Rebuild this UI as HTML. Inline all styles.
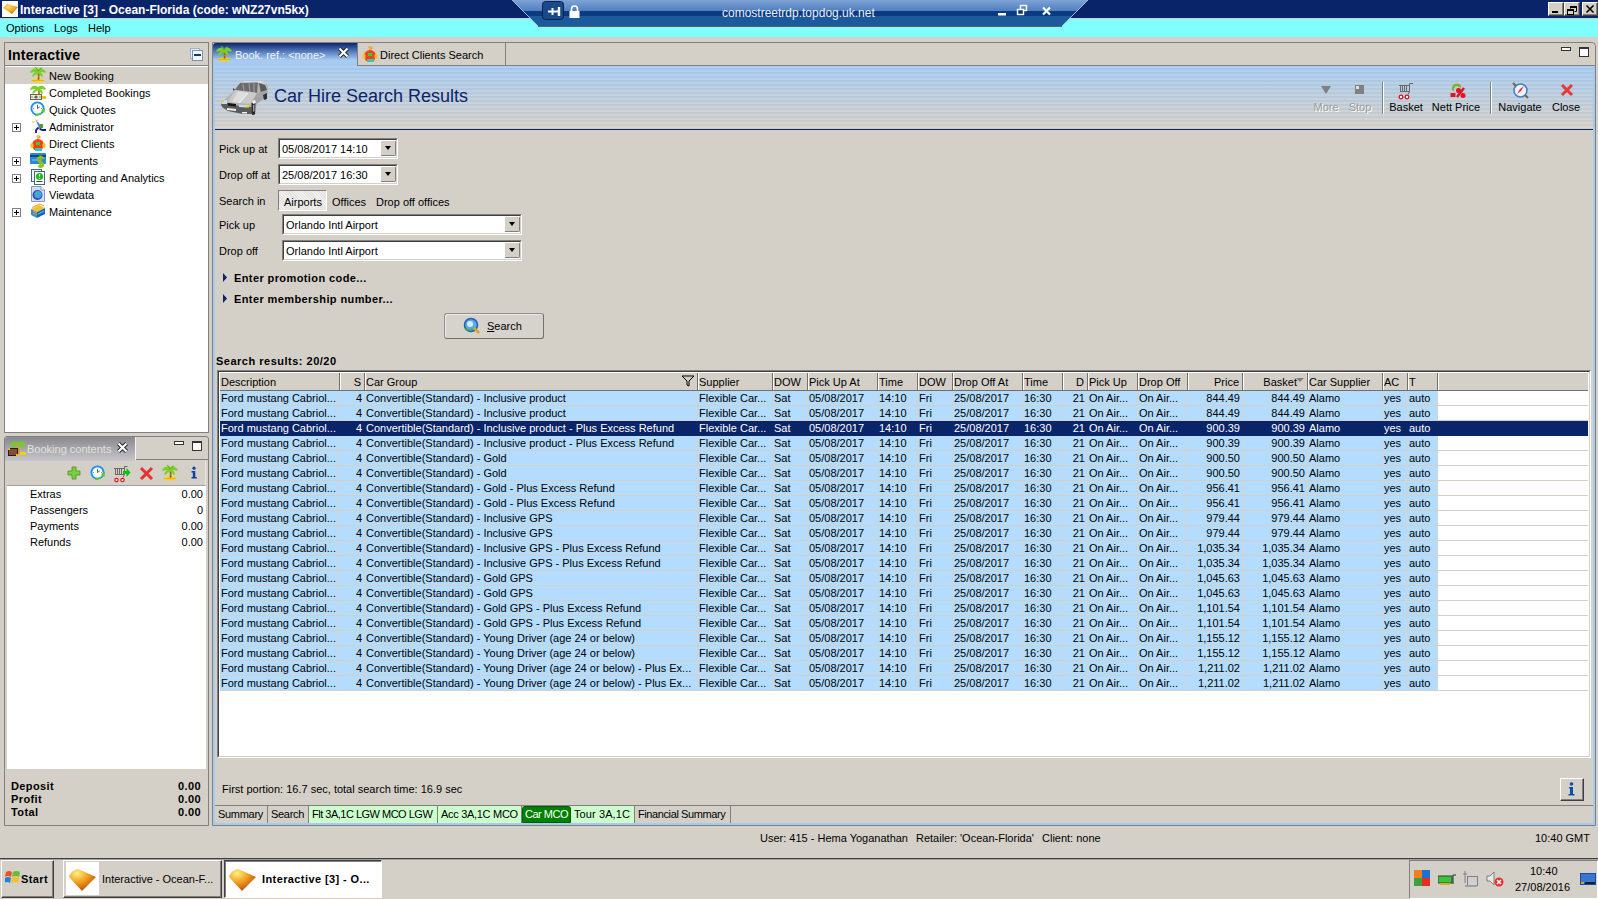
<!DOCTYPE html><html><head><meta charset="utf-8"><style>
*{box-sizing:border-box;margin:0;padding:0}
html,body{width:1598px;height:899px;overflow:hidden;background:#d4d0c8;font-family:"Liberation Sans",sans-serif;font-size:11px;color:#000;position:relative}
.a{position:absolute}
.t{position:absolute;white-space:nowrap;line-height:13px;margin-top:1px}
.b{font-weight:bold;letter-spacing:0.4px}
.sunk{border-style:solid;border-width:1px;border-color:#808080 #fff #fff #808080}
.sunk2{border-style:solid;border-width:1px;border-color:#404040 #d4d0c8 #d4d0c8 #404040}
.rais{border-style:solid;border-width:1px;border-color:#fff #404040 #404040 #fff}
.rais2{border-style:solid;border-width:1px;border-color:#d4d0c8 #808080 #808080 #d4d0c8}
.ddb{position:absolute;background:#d4d0c8;border:1px solid;border-color:#fff #808080 #808080 #fff;border-radius:2px}
.ddb:after{content:"";position:absolute;left:50%;top:50%;margin:-2px 0 0 -3px;border-left:3px solid transparent;border-right:3px solid transparent;border-top:4px solid #000}
.hdr{position:absolute;top:0;height:16px;background:#d4d0c8;border-right:1px solid #808080;border-bottom:1px solid #808080;border-top:1px solid #fff;line-height:14px;padding:0 2px;overflow:hidden;white-space:nowrap}
.c{position:absolute;white-space:nowrap;overflow:hidden;line-height:14px;padding:0 2px}
.r{text-align:right}
</style></head><body>
<div class="a" style="left:0;top:0;width:1598px;height:18px;background:#0a246a"></div>
<div class="a" style="left:0;top:18px;width:1598px;height:1px;background:#d4d0c8"></div>
<div class="a" style="left:0;top:19px;width:1598px;height:18px;background:#80ffff"></div>
<div class="a" style="left:2px;top:1px;width:16px;height:16px;background:#fff"></div>
<svg class="a" style="left:2px;top:1px" width="16" height="16"><defs><radialGradient id="gi" cx="0.35" cy="0.3" r="0.8"><stop offset="0" stop-color="#ffe060"/><stop offset="0.6" stop-color="#f0a020"/><stop offset="1" stop-color="#c05010"/></radialGradient></defs><path d="M1 7 L5 3 L16 6 L10 13 Z" fill="url(#gi)"/></svg>
<div class="t b" style="left:20px;top:2px;color:#fff;font-size:12px;line-height:14px;letter-spacing:0">Interactive [3] - Ocean-Florida (code: wNZ27vn5kx)</div>
<div class="a" style="left:1548px;top:2px;width:16px;height:14px;background:#d4d0c8;border:1px solid;border-color:#fff #404040 #404040 #fff;box-shadow:inset -1px -1px #808080"></div>
<div class="a" style="left:1564px;top:2px;width:16px;height:14px;background:#d4d0c8;border:1px solid;border-color:#fff #404040 #404040 #fff;box-shadow:inset -1px -1px #808080"></div>
<div class="a" style="left:1582px;top:2px;width:16px;height:14px;background:#d4d0c8;border:1px solid;border-color:#fff #404040 #404040 #fff;box-shadow:inset -1px -1px #808080"></div>
<div class="a" style="left:1552px;top:11px;width:6px;height:2px;background:#000"></div>
<svg class="a" style="left:1564px;top:2px" width="16" height="14"><path d="M6.5 4.5h6v5h-2 M6.5 6.5V4" fill="none" stroke="#000" stroke-width="1"/><rect x="6" y="4" width="7" height="2" fill="#000"/><rect x="3.5" y="7.5" width="6" height="5" fill="none" stroke="#000"/><rect x="3" y="7" width="7" height="2" fill="#000"/></svg>
<svg class="a" style="left:1582px;top:2px" width="16" height="14"><path d="M4.5 3.5l7 7M11.5 3.5l-7 7" stroke="#000" stroke-width="1.6"/></svg>
<svg class="a" style="left:510px;top:0" width="580" height="28">
<defs><linearGradient id="rdp" x1="0" y1="0" x2="0" y2="1">
<stop offset="0" stop-color="#7fa3d6"/><stop offset="0.42" stop-color="#4f7fbd"/><stop offset="0.43" stop-color="#0a3a82"/><stop offset="0.62" stop-color="#0a3a82"/><stop offset="0.63" stop-color="#1c5a9c"/><stop offset="1" stop-color="#1c5a9c"/></linearGradient></defs>
<path d="M2 0 L578 0 L552 26 L28 26 Z" fill="url(#rdp)"/>
<path d="M28 26.5 L552 26.5" stroke="#606060" stroke-width="1"/>
<path d="M2 0 L28 26" stroke="#a0b8d8" stroke-width="1"/>
<path d="M578 0 L552 26" stroke="#a0b8d8" stroke-width="1"/>
<rect x="32.5" y="1.5" width="21" height="18" rx="3" fill="#1a4a8a" stroke="#0a2050" />
<path d="M38 11.5h11" stroke="#fff" stroke-width="2"/><path d="M49 7v9" stroke="#fff" stroke-width="2.4"/><path d="M42.5 8v7" stroke="#fff" stroke-width="2"/>
<path d="M61.5 11V9a3 3 0 0 1 6 0v2" stroke="#fff" stroke-width="1.6" fill="none"/>
<rect x="59.5" y="11" width="10" height="7" fill="#fff"/>
<rect x="488" y="13" width="8" height="2.5" fill="#fff"/>
<rect x="510.5" y="5.5" width="6" height="5" fill="none" stroke="#fff" stroke-width="1.4"/>
<rect x="507.5" y="9.5" width="6" height="5" fill="#0a3a82" stroke="#fff" stroke-width="1.4"/>
<path d="M533 7.5l7 7M540 7.5l-7 7" stroke="#fff" stroke-width="2.2"/>
</svg>
<div class="t" style="left:722px;top:6px;color:#e8eef8;font-size:12px">comostreetrdp.topdog.uk.net</div>
<div class="t" style="left:6px;top:21px">Options</div>
<div class="t" style="left:54px;top:21px">Logs</div>
<div class="t" style="left:88px;top:21px">Help</div>
<div class="a" style="left:4px;top:42px;width:205px;height:391px;border:1px solid #808080;background:#fff"></div>
<div class="a" style="left:5px;top:43px;width:203px;height:23px;background:#d4d0c8;border-bottom:1px solid #808080"></div>
<div class="t b" style="left:8px;top:46px;font-size:14px;line-height:16px;letter-spacing:0.2px">Interactive</div>
<svg class="a" style="left:190px;top:48px" width="14" height="14"><rect x="0.5" y="0.5" width="9" height="10" fill="#e8f0fa" stroke="#a0b0c8"/><rect x="2.5" y="2.5" width="10" height="10" fill="#f0f8ff" stroke="#8090a8"/><rect x="4" y="6" width="7" height="2" fill="#1a3a6a"/></svg>
<div class="a" style="left:5px;top:67px;width:203px;height:17px;background:#d4d0c8"></div>
<svg class="a" style="left:30px;top:67px" width="16" height="16" viewBox="0 0 16 16"><ellipse cx="8" cy="13.5" rx="6.5" ry="1.8" fill="#f8d800"/><path d="M2 13.5h12" stroke="#e0b000" stroke-width="0.8"/><path d="M7.5 4 Q9.5 8 8.5 13" stroke="#d08018" stroke-width="2" fill="none"/><circle cx="8.7" cy="8" r="0.6" fill="#603000"/><circle cx="8.6" cy="11" r="0.6" fill="#603000"/><path d="M8 4 Q4 0.5 1 5 Q4 3.5 8 4.5 Q5 5 3 9 Q6 6 8 5 Q10 6 12 9 Q11 5 8 4.5 Q12 3.5 15 5 Q12 0.5 8 4z" fill="#78d028" stroke="#78d028" stroke-width="1.6" stroke-linejoin="round"/><path d="M8 4 Q7 1 5 0.5 M8 4 Q10 1 12 1" stroke="#60b818" stroke-width="1.2" fill="none"/></svg>
<div class="t" style="left:49px;top:69px">New Booking</div>
<svg class="a" style="left:30px;top:84px" width="16" height="16" viewBox="0 0 16 16"><path d="M8 4 Q9.5 7 9 11" stroke="#d08018" stroke-width="2" fill="none"/><path d="M8 4 Q4 0.5 1 5 Q4 3.5 8 4.5 Q5 5 3 9 Q6 6 8 5 Q10 6 12 9 Q11 5 8 4.5 Q12 3.5 15 5 Q12 0.5 8 4z" fill="#78d028" stroke="#78d028" stroke-width="1.6" stroke-linejoin="round"/><rect x="12" y="12" width="4" height="3" fill="#f0c010"/><rect x="0.5" y="10.5" width="11" height="5" fill="#e8e8d8" stroke="#686850"/><circle cx="6" cy="13" r="1.6" fill="#606050"/><path d="M2 12v2M10 12v2" stroke="#909070"/></svg>
<div class="t" style="left:49px;top:86px">Completed Bookings</div>
<svg class="a" style="left:30px;top:101px" width="16" height="16" viewBox="0 0 16 16"><circle cx="7.5" cy="7.5" r="7" fill="#1890f0"/><circle cx="7.5" cy="7.5" r="5.2" fill="#fcfcfc"/><path d="M7.5 3.8v3.7l2.3-1.8" stroke="#505050" stroke-width="0.9" fill="none"/><circle cx="3.5" cy="7.5" r="0.5" fill="#606060"/><circle cx="11.5" cy="7.5" r="0.5" fill="#606060"/><path d="M5 15 Q10 15 12.5 11 L14.5 12 L15 6.5 L11 9.5 L12.5 10 Q10.5 13 6 13z" fill="#58c828"/></svg>
<div class="t" style="left:49px;top:103px">Quick Quotes</div>
<svg class="a" style="left:30px;top:118px" width="16" height="16" viewBox="0 0 16 16"><path d="M5 1.5l3 0.5l-1 2z" fill="#f0c040"/><path d="M6 3 L9 5 L12 10 L9 10 Z" fill="#6080c0"/><rect x="10" y="6" width="3" height="4" fill="#50a030"/><path d="M8.5 9.5 L6 12 L6 15 M9.5 10.5 L12 12 L16 12" stroke="#102090" stroke-width="1.8" fill="none"/><path d="M2 4h3" stroke="#f0c040" stroke-width="1"/></svg>
<div class="t" style="left:49px;top:120px">Administrator</div>
<div class="a" style="left:12px;top:123px;width:9px;height:9px;border:1px solid #808080;background:#fff"></div>
<div class="a" style="left:14px;top:127px;width:5px;height:1px;background:#000"></div>
<div class="a" style="left:16px;top:125px;width:1px;height:5px;background:#000"></div>
<svg class="a" style="left:30px;top:135px" width="16" height="16" viewBox="0 0 16 16"><path d="M6.5 1.5 Q9 0 10 2 Q9 3.5 7 3" stroke="#f0a020" stroke-width="1.4" fill="none"/><circle cx="8" cy="10" r="6" fill="#f84018"/><rect x="0.5" y="8" width="3" height="5" rx="1.5" fill="#f8c020"/><rect x="12.5" y="8" width="3" height="5" rx="1.5" fill="#f8c020"/><rect x="6" y="7" width="4" height="3" fill="#30d040"/><rect x="5" y="13" width="7" height="3" fill="#30c8c0"/></svg>
<div class="t" style="left:49px;top:137px">Direct Clients</div>
<svg class="a" style="left:30px;top:152px" width="16" height="16" viewBox="0 0 16 16"><rect x="0" y="1" width="16" height="11" rx="1" fill="#2a88d8"/><rect x="0" y="3" width="16" height="2" fill="#104878"/><path d="M2 8h5" stroke="#80c0f0" stroke-width="1"/><path d="M13.5 7 Q13 5 10.5 5 Q7 5.5 8 8 Q9 10 11.5 10.5 Q14 11.5 13 13.5 Q11.5 15.5 8 14 M10.5 3.5v13" stroke="#90c020" stroke-width="2.2" fill="none"/></svg>
<div class="t" style="left:49px;top:154px">Payments</div>
<div class="a" style="left:12px;top:157px;width:9px;height:9px;border:1px solid #808080;background:#fff"></div>
<div class="a" style="left:14px;top:161px;width:5px;height:1px;background:#000"></div>
<div class="a" style="left:16px;top:159px;width:1px;height:5px;background:#000"></div>
<svg class="a" style="left:30px;top:169px" width="16" height="16" viewBox="0 0 16 16"><rect x="1.5" y="0.5" width="10" height="12" fill="#f4f8fc" stroke="#406878"/><rect x="4.5" y="2.5" width="10" height="13" fill="#fff" stroke="#406878"/><circle cx="9.5" cy="7.5" r="3.6" fill="#20b820"/><path d="M9.5 5v2.5M9.5 9v0.8" stroke="#fff" stroke-width="1.2"/><path d="M6.5 12.5h6" stroke="#404040"/></svg>
<div class="t" style="left:49px;top:171px">Reporting and Analytics</div>
<div class="a" style="left:12px;top:174px;width:9px;height:9px;border:1px solid #808080;background:#fff"></div>
<div class="a" style="left:14px;top:178px;width:5px;height:1px;background:#000"></div>
<div class="a" style="left:16px;top:176px;width:1px;height:5px;background:#000"></div>
<svg class="a" style="left:30px;top:186px" width="16" height="16" viewBox="0 0 16 16"><path d="M1.5 0.5h9.5l3.5 3.5v11.5h-13z" fill="#d4e0f0" stroke="#8898b8"/><path d="M11 0.5v3.5h3.5" fill="#fff" stroke="#8898b8"/><circle cx="7.5" cy="9" r="5" fill="#3040c0"/><circle cx="8" cy="8.5" r="3.8" fill="#40a0e8"/><path d="M6 6 Q9 6 9 9 Q7 11 5.5 9z" fill="#30c0a0"/></svg>
<div class="t" style="left:49px;top:188px">Viewdata</div>
<svg class="a" style="left:30px;top:203px" width="16" height="16" viewBox="0 0 16 16"><path d="M1 6 L9 2 L15 5 L7 9 Z" fill="#f8c030"/><path d="M1 6 L7 9 L7 15 L1 12 Z" fill="#2a90d8"/><path d="M7 9 L15 5 L15 11 L7 15 Z" fill="#1868b8"/><path d="M2 4.5 L10 1 L14 3 M3 8 L7 10 M3 10 L7 12" stroke="#f0a020" stroke-width="1" fill="none"/><path d="M8 11 L14 8" stroke="#60c0f0"/></svg>
<div class="t" style="left:49px;top:205px">Maintenance</div>
<div class="a" style="left:12px;top:208px;width:9px;height:9px;border:1px solid #808080;background:#fff"></div>
<div class="a" style="left:14px;top:212px;width:5px;height:1px;background:#000"></div>
<div class="a" style="left:16px;top:210px;width:1px;height:5px;background:#000"></div>
<div class="a" style="left:4px;top:436px;width:205px;height:390px;border:1px solid #808080;border-radius:3px 3px 0 0;background:#d4d0c8"></div>
<div class="a" style="left:5px;top:437px;width:130px;height:24px;background:linear-gradient(#8a8a8e,#a8a8ac 50%,#c8c6cc);border-radius:3px 0 0 0"></div>
<div class="a" style="left:135px;top:459px;width:73px;height:1px;background:#808080"></div>
<div class="a" style="left:135px;top:437px;width:1px;height:23px;background:#f4f4f4"></div>
<svg class="a" style="left:8px;top:440px" width="18" height="16" viewBox="0 0 18 16"><path d="M10 4 Q11 8 10.5 14" stroke="#d0a020" stroke-width="2" fill="none"/><path d="M10 4 Q6 1 3 5 M10 4 Q14 1 17 5 M10 4 Q7 3 5 8 M10 4 Q13 3 15 8" stroke="#70d020" stroke-width="2" fill="none"/><rect x="12" y="12" width="6" height="3" fill="#f8d000"/><rect x="0.5" y="8.5" width="9" height="7" fill="#805030" stroke="#301808"/><rect x="0" y="8" width="2" height="2" fill="#f0c000"/><rect x="8" y="14" width="2" height="2" fill="#f0c000"/></svg>
<div class="t" style="left:27px;top:442px;color:#e4e0dc">Booking contents</div>
<svg class="a" style="left:116px;top:441px" width="13" height="13"><path d="M2.5 2.5l8 8M10.5 2.5l-8 8" stroke="#202020" stroke-width="4"/><path d="M2.5 2.5l8 8M10.5 2.5l-8 8" stroke="#fff" stroke-width="2.2"/></svg>
<div class="a" style="left:174px;top:441px;width:10px;height:4px;border:1px solid #333;background:#fff"></div>
<div class="a" style="left:192px;top:441px;width:10px;height:10px;border:1px solid #333;border-top-width:2px;background:#fff"></div>
<div class="a" style="left:7px;top:461px;width:199px;height:25px;background:#d4d0c8;border-bottom:1px solid #a0a0a0;border-right:1px solid #e8e8e8"></div>
<svg class="a" style="left:66px;top:465px" width="16" height="16" viewBox="0 0 16 16"><path d="M6 2h4v4h4v4h-4v4h-4v-4h-4v-4h4z" fill="#7ad040" stroke="#4a9020" stroke-width="0.8"/></svg>
<svg class="a" style="left:90px;top:465px" width="16" height="16" viewBox="0 0 16 16"><circle cx="7.5" cy="7.5" r="7" fill="#1890f0"/><circle cx="7.5" cy="7.5" r="5.2" fill="#fcfcfc"/><path d="M7.5 3.8v3.7l2.3-1.8" stroke="#505050" stroke-width="0.9" fill="none"/><circle cx="3.5" cy="7.5" r="0.5" fill="#606060"/><circle cx="11.5" cy="7.5" r="0.5" fill="#606060"/><path d="M5 15 Q10 15 12.5 11 L14.5 12 L15 6.5 L11 9.5 L12.5 10 Q10.5 13 6 13z" fill="#58c828"/></svg>
<svg class="a" style="left:113px;top:465px" width="18" height="18" viewBox="0 0 18 18"><path d="M1 3.5h10.5M2.5 3.5v6M4.5 3.5v6M6.5 3.5v6M8.5 3.5v6M2 9.5h9M11.5 9.5V1.5h3M11.5 9.5l-1.5 3" stroke="#6a6a6a" stroke-width="1" fill="none"/><circle cx="3.5" cy="15" r="1.7" fill="#fff" stroke="#e81010" stroke-width="1.2"/><circle cx="9.5" cy="15" r="1.7" fill="#fff" stroke="#e81010" stroke-width="1.2"/><path d="M10 6h3.5v-3l4 4.5-4 4.5v-3h-3.5z" fill="#10c010"/></svg>
<svg class="a" style="left:139px;top:466px" width="15" height="15" viewBox="0 0 15 15"><path d="M2 2l11 11M13 2l-11 11" stroke="#e83030" stroke-width="3"/></svg>
<svg class="a" style="left:162px;top:465px" width="16" height="16" viewBox="0 0 16 16"><ellipse cx="8" cy="13.5" rx="6.5" ry="1.8" fill="#f8d800"/><path d="M2 13.5h12" stroke="#e0b000" stroke-width="0.8"/><path d="M7.5 4 Q9.5 8 8.5 13" stroke="#d08018" stroke-width="2" fill="none"/><circle cx="8.7" cy="8" r="0.6" fill="#603000"/><circle cx="8.6" cy="11" r="0.6" fill="#603000"/><path d="M8 4 Q4 0.5 1 5 Q4 3.5 8 4.5 Q5 5 3 9 Q6 6 8 5 Q10 6 12 9 Q11 5 8 4.5 Q12 3.5 15 5 Q12 0.5 8 4z" fill="#78d028" stroke="#78d028" stroke-width="1.6" stroke-linejoin="round"/><path d="M8 4 Q7 1 5 0.5 M8 4 Q10 1 12 1" stroke="#60b818" stroke-width="1.2" fill="none"/></svg>
<svg class="a" style="left:189px;top:466px" width="10" height="13" viewBox="0 0 10 13"><circle cx="5" cy="2.2" r="1.6" fill="#1040a8"/><path d="M2.5 5h3.8v6h1.5v1.5h-5.3v-1.5h1.3v-4.5h-1.3z" fill="#1040a8"/></svg>
<div class="a" style="left:7px;top:486px;width:199px;height:283px;background:#fff"></div>
<div class="t" style="left:30px;top:487px">Extras</div>
<div class="t" style="right:1395px;top:487px">0.00</div>
<div class="t" style="left:30px;top:503px">Passengers</div>
<div class="t" style="right:1395px;top:503px">0</div>
<div class="t" style="left:30px;top:519px">Payments</div>
<div class="t" style="right:1395px;top:519px">0.00</div>
<div class="t" style="left:30px;top:535px">Refunds</div>
<div class="t" style="right:1395px;top:535px">0.00</div>
<div class="t b" style="left:11px;top:779px">Deposit</div>
<div class="t b" style="right:1397px;top:779px">0.00</div>
<div class="t b" style="left:11px;top:792px">Profit</div>
<div class="t b" style="right:1397px;top:792px">0.00</div>
<div class="t b" style="left:11px;top:805px">Total</div>
<div class="t b" style="right:1397px;top:805px">0.00</div>
<div class="t" style="left:760px;top:831px">User: 415 - Hema Yoganathan</div>
<div class="t" style="left:916px;top:831px">Retailer: 'Ocean-Florida'</div>
<div class="t" style="left:1042px;top:831px">Client: none</div>
<div class="t" style="right:8px;top:831px">10:40 GMT</div>
<div class="a" style="left:0;top:858px;width:1598px;height:1px;background:#404040"></div>
<div class="a" style="left:0;top:859px;width:1598px;height:1px;background:#a0a0a0"></div>
<div class="a" style="left:1px;top:860px;width:53px;height:38px;background:#d4d0c8;border:1px solid;border-color:#fff #404040 #404040 #fff;box-shadow:inset -1px -1px #808080"></div>
<svg class="a" style="left:5px;top:869px" width="16" height="16" viewBox="0 0 16 16"><path d="M1 3 Q4 1 7 3 L6 8 Q3 6 0 8z" fill="#f05020"/><path d="M8 3 Q11 1 15 3 L14 8 Q11 6 7 8z" fill="#60c030"/><path d="M0 9 Q3 7 6 9 L5 14 Q2 12 -1 14z" fill="#2080e0"/><path d="M7 9 Q10 7 14 9 L13 14 Q10 12 6 14z" fill="#f8c020"/></svg>
<div class="t b" style="left:21px;top:872px">Start</div>
<div class="a" style="left:63px;top:860px;width:159px;height:38px;background:#d4d0c8;border:1px solid;border-color:#fff #404040 #404040 #fff;box-shadow:inset -1px -1px #808080"></div>
<div class="a" style="left:66px;top:862px;width:33px;height:33px;background:#fff"></div>
<svg class="a" style="left:68px;top:866px" width="30" height="27" viewBox="0 0 30 27"><defs><radialGradient id="tg1" cx="0.3" cy="0.2" r="0.9"><stop offset="0" stop-color="#fff080"/><stop offset="0.45" stop-color="#f0a020"/><stop offset="1" stop-color="#b04008"/></radialGradient></defs><path d="M1 11 Q3 4 10 3 L28 11 L14 25 Z" fill="url(#tg1)"/></svg>
<div class="t" style="left:102px;top:872px">Interactive - Ocean-F...</div>
<div class="a" style="left:224px;top:860px;width:158px;height:38px;background:#fff;border:1px solid;border-color:#404040 #fff #fff #404040;box-shadow:inset 1px 1px #808080"></div>
<svg class="a" style="left:228px;top:866px" width="30" height="27" viewBox="0 0 30 27"><defs><radialGradient id="tg2" cx="0.3" cy="0.2" r="0.9"><stop offset="0" stop-color="#fff080"/><stop offset="0.45" stop-color="#f0a020"/><stop offset="1" stop-color="#b04008"/></radialGradient></defs><path d="M1 11 Q3 4 10 3 L28 11 L14 25 Z" fill="url(#tg2)"/></svg>
<div class="t b" style="left:262px;top:872px">Interactive [3] - O...</div>
<div class="a" style="left:1409px;top:860px;width:189px;height:39px;border:1px solid;border-color:#808080 #fff #fff #808080"></div>
<svg class="a" style="left:1414px;top:870px" width="16" height="16" viewBox="0 0 16 16"><rect x="0" y="0" width="8" height="8" fill="#f08020"/><rect x="8" y="0" width="8" height="8" fill="#2070d0"/><rect x="0" y="8" width="8" height="8" fill="#40a040"/><rect x="8" y="8" width="8" height="8" fill="#e03020"/></svg>
<svg class="a" style="left:1438px;top:873px" width="18" height="14" viewBox="0 0 18 14"><rect x="0" y="3" width="14" height="7" fill="#40c040" stroke="#205020"/><rect x="2" y="10" width="10" height="2" fill="#d0b020"/><path d="M15 2v9M15 2h3" stroke="#203020"/></svg>
<svg class="a" style="left:1462px;top:870px" width="18" height="18" viewBox="0 0 18 18"><rect x="5.5" y="6.5" width="10" height="9" fill="#d0d0d0" stroke="#808080"/><path d="M3 1v12M1 4h4" stroke="#808080" fill="none"/><rect x="3" y="15" width="12" height="2" fill="#a0a0a0"/></svg>
<svg class="a" style="left:1486px;top:871px" width="18" height="16" viewBox="0 0 18 16"><path d="M1 5h3l4-4v13l-4-4h-3z" fill="#e8e8e8" stroke="#808080"/><circle cx="13" cy="11" r="4.5" fill="#e83030"/><path d="M11 9l4 4M15 9l-4 4" stroke="#fff" stroke-width="1.5"/></svg>
<div class="t" style="left:1530px;top:864px">10:40</div>
<div class="t" style="left:1515px;top:880px">27/08/2016</div>
<svg class="a" style="left:1580px;top:873px" width="16" height="13" viewBox="0 0 16 13"><rect x="0" y="0" width="16" height="12" fill="#1a4aa8"/><rect x="1" y="1" width="14" height="9" fill="#3a78d0"/><rect x="5" y="9" width="10" height="2" fill="#102030"/><rect x="1" y="9" width="3" height="2" fill="#e0a020"/></svg>
<div class="a" style="left:212px;top:42px;width:1384px;height:784px;border:1px solid #808080;border-radius:0 4px 0 0;background:#d4d0c8"></div>
<div class="a" style="left:212px;top:65px;width:1384px;height:1px;background:#808080"></div>
<div class="a" style="left:213px;top:66px;width:1382px;height:759px;border:2px solid #a6caf0;border-top:0"></div>
<div class="a" style="left:213px;top:43px;width:144px;height:23px;background:linear-gradient(#0a246a 0px,#5a80c0 9px,#a6caf0 17px,#a6caf0 23px);border-radius:3px 0 0 0"></div>
<svg class="a" style="left:216px;top:46px" width="16" height="16" viewBox="0 0 16 16"><ellipse cx="8" cy="13.5" rx="6.5" ry="1.8" fill="#f8d800"/><path d="M2 13.5h12" stroke="#e0b000" stroke-width="0.8"/><path d="M7.5 4 Q9.5 8 8.5 13" stroke="#d08018" stroke-width="2" fill="none"/><circle cx="8.7" cy="8" r="0.6" fill="#603000"/><circle cx="8.6" cy="11" r="0.6" fill="#603000"/><path d="M8 4 Q4 0.5 1 5 Q4 3.5 8 4.5 Q5 5 3 9 Q6 6 8 5 Q10 6 12 9 Q11 5 8 4.5 Q12 3.5 15 5 Q12 0.5 8 4z" fill="#78d028" stroke="#78d028" stroke-width="1.6" stroke-linejoin="round"/><path d="M8 4 Q7 1 5 0.5 M8 4 Q10 1 12 1" stroke="#60b818" stroke-width="1.2" fill="none"/></svg>
<div class="t" style="left:235px;top:48px;color:#f0f4fa">Book. ref.: &lt;none&gt;</div>
<svg class="a" style="left:337px;top:46px" width="13" height="13" viewBox="0 0 13 13"><path d="M2.5 2.5l8 8M10.5 2.5l-8 8" stroke="#202020" stroke-width="4"/><path d="M2.5 2.5l8 8M10.5 2.5l-8 8" stroke="#fff" stroke-width="2.2"/></svg>
<div class="a" style="left:357px;top:43px;width:149px;height:23px;border-right:1px solid #808080;border-left:1px solid #808080"></div>
<svg class="a" style="left:362px;top:46px" width="16" height="16" viewBox="0 0 16 16"><path d="M6.5 1.5 Q9 0 10 2 Q9 3.5 7 3" stroke="#f0a020" stroke-width="1.4" fill="none"/><circle cx="8" cy="10" r="6" fill="#f84018"/><rect x="0.5" y="8" width="3" height="5" rx="1.5" fill="#f8c020"/><rect x="12.5" y="8" width="3" height="5" rx="1.5" fill="#f8c020"/><rect x="6" y="7" width="4" height="3" fill="#30d040"/><rect x="5" y="13" width="7" height="3" fill="#30c8c0"/></svg>
<div class="t" style="left:380px;top:48px">Direct Clients Search</div>
<div class="a" style="left:1561px;top:47px;width:10px;height:4px;border:1px solid #333;background:#fff"></div>
<div class="a" style="left:1579px;top:47px;width:10px;height:10px;border:1px solid #333;border-top-width:2px;background:#fff"></div>
<div class="a" style="left:215px;top:66px;width:1378px;height:63px;background:repeating-linear-gradient(rgba(255,255,255,0.10) 0 2px,rgba(0,0,0,0.02) 2px 4px),linear-gradient(#a6caf0,#d4d0c8)"></div>
<div class="a" style="left:215px;top:129px;width:1378px;height:1px;background:#0a246a"></div>
<svg class="a" style="left:221px;top:80px" width="49" height="36" viewBox="0 0 49 36">
<path d="M0 23 L5 18 L11 13 L16 6 L23 1 L41 1 L45 4 L47 6 L47 12 L45 17 L41 20 L36 23 L34 34 L22 34 L7 31 L1 27 Z" fill="#b4b4b4"/>
<path d="M16 6 L23 1 L41 1 L45 4 L38 3 L19 3 Z" fill="#d8d8d8"/>
<path d="M14 10 L19 3 L37 2.5 L36 13 Z" fill="#6c6c6c"/>
<path d="M22 4 L23 11 M28 3 L29 12 M33 3 L33 12" stroke="#9a9a9a" stroke-width="1.2"/>
<path d="M38 3 L44 5 L46 10 L40 13 Z" fill="#585858"/>
<path d="M14 10 L36 13 L29 24 L7 22 Z" fill="#cacaca"/>
<path d="M17 11.5 L27 13 L19 23 L11 22 Z" fill="#dedede"/>
<path d="M27 13 L18 23" stroke="#f4f4f4" stroke-width="1"/>
<path d="M36 13 L46 10 L45 17 L41 20 L35 24 L30 24 Z" fill="#a4a4a4"/>
<path d="M0 24 L7 23 L18 26 L30 27 L34 25 L34 34 L22 34 L7 31 L1 27 Z" fill="#5c5c5c"/>
<rect x="1" y="20" width="5" height="4" fill="#c4dcec"/>
<rect x="1" y="20" width="2" height="2" fill="#e0d040"/>
<path d="M7 23 L15 24 L15 26.5 L7 25.5 Z" fill="#141414"/>
<path d="M18 25 L26 25.5 L26 27.5 L18 27 Z" fill="#c4e0f4"/>
<rect x="25" y="25" width="3" height="2.5" fill="#f0dc10"/>
<path d="M6 28 L15 29 L15 31 L6 30 Z" fill="#f0f0f0"/>
<rect x="21" y="32" width="5" height="1.5" fill="#f0f0f0"/>
<path d="M30.5 23 L34.5 22 L34 34.5 L31 35 Z" fill="#282828"/>
<path d="M31 21 L34 20 L35 23 L32 24 Z" fill="#f0f0f0"/>
<path d="M32 25 L33.5 24.5 L33.5 31 L32 32 Z" fill="#a0a0a0"/>
<path d="M42 15 L46 13 L46 19 L43 20 Z" fill="#303030"/>
<path d="M12 8 L14 10 L12 10.5 Z" fill="#303030"/>
</svg>
<div class="t" style="left:274px;top:85px;color:#0a246a;font-size:18px;line-height:20px">Car Hire Search Results</div>
<svg class="a" style="left:1319px;top:84px" width="14" height="12" viewBox="0 0 14 12"><path d="M2 2h10l-5 8z" fill="#808080"/></svg>
<div class="t" style="left:1286px;width:80px;text-align:center;top:100px;color:#9a9a9a;text-shadow:1px 1px 0 #fff;">More</div>
<svg class="a" style="left:1355px;top:85px" width="10" height="10" viewBox="0 0 10 10"><rect x="0" y="0" width="9" height="9" fill="#808080"/><rect x="1" y="1" width="3" height="3" fill="#e0e0e0"/></svg>
<div class="t" style="left:1320px;width:80px;text-align:center;top:100px;color:#9a9a9a;text-shadow:1px 1px 0 #fff;">Stop</div>
<div class="a" style="left:1382px;top:82px;width:1px;height:32px;background:#808080"></div>
<div class="a" style="left:1383px;top:82px;width:1px;height:32px;background:#fff"></div>
<svg class="a" style="left:1397px;top:82px" width="18" height="18" viewBox="0 0 18 18"><path d="M2 3.5h10.5M3.5 3.5v6M5.5 3.5v6M7.5 3.5v6M9.5 3.5v6M3 9.5h10M12.5 9.5V1.5h3.5M12.5 9.5l-1.5 3" stroke="#6a6a6a" stroke-width="1" fill="none"/><path d="M4 15h6" stroke="#60a0a0" stroke-width="1"/><circle cx="4" cy="15" r="1.8" fill="#fff" stroke="#e81010" stroke-width="1.3"/><circle cx="10" cy="15" r="1.8" fill="#fff" stroke="#e81010" stroke-width="1.3"/></svg>
<div class="t" style="left:1366px;width:80px;text-align:center;top:100px;color:#000;">Basket</div>
<svg class="a" style="left:1449px;top:82px" width="17" height="17" viewBox="0 0 17 17"><path d="M3 8 Q2 2 8 1.5 Q13 2 12 6 Q9 3 5 6 Q4 8 6 10z" fill="#80b030"/><path d="M6 5 Q8 4 10 6" stroke="#c0e080" stroke-width="1" fill="none"/><rect x="1.5" y="11" width="5" height="4" fill="#e81020"/><circle cx="9.5" cy="8.5" r="2.5" fill="#e81020"/><circle cx="14" cy="13.5" r="2.5" fill="#e81020"/><path d="M8 15l7-9" stroke="#e81020" stroke-width="2.4"/></svg>
<div class="t" style="left:1416px;width:80px;text-align:center;top:100px;color:#000;">Nett Price</div>
<div class="a" style="left:1490px;top:82px;width:1px;height:32px;background:#808080"></div>
<div class="a" style="left:1491px;top:82px;width:1px;height:32px;background:#fff"></div>
<svg class="a" style="left:1512px;top:82px" width="17" height="17" viewBox="0 0 17 17"><circle cx="8.5" cy="8.5" r="6.5" fill="#f0f0f8" stroke="#4080c0" stroke-width="1.5"/><path d="M5 12l3-5 4-3-3 5z" fill="#e03030"/><path d="M1 1l3 3M16 16l-3-3" stroke="#806040" stroke-width="2"/></svg>
<div class="t" style="left:1480px;width:80px;text-align:center;top:100px;color:#000;">Navigate</div>
<svg class="a" style="left:1560px;top:83px" width="14" height="14" viewBox="0 0 14 14"><path d="M2 2l10 10M12 2l-10 10" stroke="#e83838" stroke-width="3"/></svg>
<div class="t" style="left:1526px;width:80px;text-align:center;top:100px;color:#000;">Close</div>
<div class="t" style="left:219px;top:142px;">Pick up at</div>
<div class="t" style="left:219px;top:168px;">Drop off at</div>
<div class="t" style="left:219px;top:194px;">Search in</div>
<div class="t" style="left:219px;top:218px;">Pick up</div>
<div class="t" style="left:219px;top:244px;">Drop off</div>
<div class="a" style="left:278px;top:138px;width:120px;height:21px;background:#fff;border:1px solid;border-color:#808080 #fff #fff #808080"></div>
<div class="a" style="left:279px;top:139px;width:118px;height:19px;border:1px solid;border-color:#404040 #d4d0c8 #d4d0c8 #404040"></div>
<div class="ddb" style="left:380px;top:140px;width:16px;height:16px"></div>
<div class="t" style="left:282px;top:142px">05/08/2017 14:10</div>
<div class="a" style="left:278px;top:164px;width:120px;height:21px;background:#fff;border:1px solid;border-color:#808080 #fff #fff #808080"></div>
<div class="a" style="left:279px;top:165px;width:118px;height:19px;border:1px solid;border-color:#404040 #d4d0c8 #d4d0c8 #404040"></div>
<div class="ddb" style="left:380px;top:166px;width:16px;height:16px"></div>
<div class="t" style="left:282px;top:168px">25/08/2017 16:30</div>
<div class="a" style="left:282px;top:214px;width:240px;height:21px;background:#fff;border:1px solid;border-color:#808080 #fff #fff #808080"></div>
<div class="a" style="left:283px;top:215px;width:238px;height:19px;border:1px solid;border-color:#404040 #d4d0c8 #d4d0c8 #404040"></div>
<div class="ddb" style="left:504px;top:216px;width:16px;height:16px"></div>
<div class="t" style="left:286px;top:218px">Orlando Intl Airport</div>
<div class="a" style="left:282px;top:240px;width:240px;height:21px;background:#fff;border:1px solid;border-color:#808080 #fff #fff #808080"></div>
<div class="a" style="left:283px;top:241px;width:238px;height:19px;border:1px solid;border-color:#404040 #d4d0c8 #d4d0c8 #404040"></div>
<div class="ddb" style="left:504px;top:242px;width:16px;height:16px"></div>
<div class="t" style="left:286px;top:244px">Orlando Intl Airport</div>
<div class="a" style="left:278px;top:190px;width:49px;height:21px;border:1px solid;border-color:#808080 #fff #fff #808080;background-color:#e4e2de;background-image:repeating-linear-gradient(45deg,rgba(255,255,255,.5) 0 1px,transparent 1px 2px)"></div>
<div class="t" style="left:284px;top:195px;">Airports</div>
<div class="t" style="left:332px;top:195px;">Offices</div>
<div class="t" style="left:376px;top:195px;">Drop off offices</div>
<svg class="a" style="left:222px;top:273px" width="6" height="9" viewBox="0 0 6 9"><path d="M1 0l4 4.5-4 4.5z" fill="#0a246a"/></svg>
<div class="t" style="left:234px;top:271px;font-weight:bold;letter-spacing:0.4px">Enter promotion code...</div>
<svg class="a" style="left:222px;top:294px" width="6" height="9" viewBox="0 0 6 9"><path d="M1 0l4 4.5-4 4.5z" fill="#0a246a"/></svg>
<div class="t" style="left:234px;top:292px;font-weight:bold;letter-spacing:0.4px">Enter membership number...</div>
<div class="a" style="left:444px;top:313px;width:100px;height:26px;background:#d6d2cc;border:1px solid #909090;border-bottom-color:#707070;border-right-color:#707070;border-radius:3px;box-shadow:inset 1px 1px #ece8e4"></div>
<svg class="a" style="left:463px;top:317px" width="18" height="18" viewBox="0 0 18 18"><circle cx="8" cy="8" r="6.5" fill="#60a8e8" stroke="#2060b0" stroke-width="1.5"/><circle cx="7" cy="7" r="3" fill="#d0f0ff"/><path d="M11 11l5 5" stroke="#e0a020" stroke-width="2.5"/><path d="M2 12 Q6 14 10 12" stroke="#40b040" stroke-width="1.5" fill="none"/></svg>
<div class="t" style="left:487px;top:319px;"><u>S</u>earch</div>
<div class="t" style="left:216px;top:354px;font-weight:bold;letter-spacing:0.5px">Search results: 20/20</div>
<div class="a" style="left:217px;top:370px;width:1374px;height:388px;background:#fff;border:1px solid;border-color:#808080 #fff #fff #808080"></div>
<div class="a" style="left:218px;top:371px;width:1372px;height:386px;border:1px solid;border-color:#404040 #d4d0c8 #d4d0c8 #404040"></div>
<div class="a" style="left:220px;top:372px;width:1368px;height:19px;background:#d4d0c8;border-bottom:1px solid #707070;border-top:1px solid #fff"></div>
<div class="a" style="left:339px;top:373px;width:1px;height:17px;background:#707070"></div>
<div class="a" style="left:340px;top:373px;width:1px;height:17px;background:#fff"></div>
<div class="t" style="left:221px;top:375px">Description</div>
<div class="a" style="left:364px;top:373px;width:1px;height:17px;background:#707070"></div>
<div class="a" style="left:365px;top:373px;width:1px;height:17px;background:#fff"></div>
<div class="t" style="right:1237px;top:375px">S</div>
<div class="a" style="left:697px;top:373px;width:1px;height:17px;background:#707070"></div>
<div class="a" style="left:698px;top:373px;width:1px;height:17px;background:#fff"></div>
<div class="t" style="left:366px;top:375px">Car Group</div>
<div class="a" style="left:772px;top:373px;width:1px;height:17px;background:#707070"></div>
<div class="a" style="left:773px;top:373px;width:1px;height:17px;background:#fff"></div>
<div class="t" style="left:699px;top:375px">Supplier</div>
<div class="a" style="left:807px;top:373px;width:1px;height:17px;background:#707070"></div>
<div class="a" style="left:808px;top:373px;width:1px;height:17px;background:#fff"></div>
<div class="t" style="left:774px;top:375px">DOW</div>
<div class="a" style="left:877px;top:373px;width:1px;height:17px;background:#707070"></div>
<div class="a" style="left:878px;top:373px;width:1px;height:17px;background:#fff"></div>
<div class="t" style="left:809px;top:375px">Pick Up At</div>
<div class="a" style="left:917px;top:373px;width:1px;height:17px;background:#707070"></div>
<div class="a" style="left:918px;top:373px;width:1px;height:17px;background:#fff"></div>
<div class="t" style="left:879px;top:375px">Time</div>
<div class="a" style="left:952px;top:373px;width:1px;height:17px;background:#707070"></div>
<div class="a" style="left:953px;top:373px;width:1px;height:17px;background:#fff"></div>
<div class="t" style="left:919px;top:375px">DOW</div>
<div class="a" style="left:1022px;top:373px;width:1px;height:17px;background:#707070"></div>
<div class="a" style="left:1023px;top:373px;width:1px;height:17px;background:#fff"></div>
<div class="t" style="left:954px;top:375px">Drop Off At</div>
<div class="a" style="left:1062px;top:373px;width:1px;height:17px;background:#707070"></div>
<div class="a" style="left:1063px;top:373px;width:1px;height:17px;background:#fff"></div>
<div class="t" style="left:1024px;top:375px">Time</div>
<div class="a" style="left:1087px;top:373px;width:1px;height:17px;background:#707070"></div>
<div class="a" style="left:1088px;top:373px;width:1px;height:17px;background:#fff"></div>
<div class="t" style="right:514px;top:375px">D</div>
<div class="a" style="left:1137px;top:373px;width:1px;height:17px;background:#707070"></div>
<div class="a" style="left:1138px;top:373px;width:1px;height:17px;background:#fff"></div>
<div class="t" style="left:1089px;top:375px">Pick Up</div>
<div class="a" style="left:1187px;top:373px;width:1px;height:17px;background:#707070"></div>
<div class="a" style="left:1188px;top:373px;width:1px;height:17px;background:#fff"></div>
<div class="t" style="left:1139px;top:375px">Drop Off</div>
<div class="a" style="left:1242px;top:373px;width:1px;height:17px;background:#707070"></div>
<div class="a" style="left:1243px;top:373px;width:1px;height:17px;background:#fff"></div>
<div class="t" style="right:359px;top:375px">Price</div>
<div class="a" style="left:1307px;top:373px;width:1px;height:17px;background:#707070"></div>
<div class="a" style="left:1308px;top:373px;width:1px;height:17px;background:#fff"></div>
<div class="t" style="right:301px;top:375px">Basket</div>
<div class="a" style="left:1382px;top:373px;width:1px;height:17px;background:#707070"></div>
<div class="a" style="left:1383px;top:373px;width:1px;height:17px;background:#fff"></div>
<div class="t" style="left:1309px;top:375px">Car Supplier</div>
<div class="a" style="left:1407px;top:373px;width:1px;height:17px;background:#707070"></div>
<div class="a" style="left:1408px;top:373px;width:1px;height:17px;background:#fff"></div>
<div class="t" style="left:1384px;top:375px">AC</div>
<div class="a" style="left:1437px;top:373px;width:1px;height:17px;background:#707070"></div>
<div class="a" style="left:1438px;top:373px;width:1px;height:17px;background:#fff"></div>
<div class="t" style="left:1409px;top:375px">T</div>
<svg class="a" style="left:681px;top:375px" width="14" height="12" viewBox="0 0 14 12"><path d="M1 1h12l-5 5v5l-2-1v-4z" fill="none" stroke="#000" stroke-width="1"/></svg>
<svg class="a" style="left:1296px;top:378px" width="8" height="5" viewBox="0 0 8 5"><path d="M0 0h8l-4 4z" fill="#808080"/></svg>
<div class="a" style="left:220px;top:391px;width:1218px;height:14px;background:#b4dcfe"></div>
<div class="a" style="left:220px;top:405px;width:1368px;height:1px;background:#d4d0c8"></div>
<div class="t" style="left:221px;top:391px;color:#000">Ford mustang Cabriol...</div>
<div class="t" style="right:1236px;top:391px;color:#000">4</div>
<div class="t" style="left:366px;top:391px;color:#000">Convertible(Standard) - Inclusive product</div>
<div class="t" style="left:699px;top:391px;color:#000">Flexible Car...</div>
<div class="t" style="left:774px;top:391px;color:#000">Sat</div>
<div class="t" style="left:809px;top:391px;color:#000">05/08/2017</div>
<div class="t" style="left:879px;top:391px;color:#000">14:10</div>
<div class="t" style="left:919px;top:391px;color:#000">Fri</div>
<div class="t" style="left:954px;top:391px;color:#000">25/08/2017</div>
<div class="t" style="left:1024px;top:391px;color:#000">16:30</div>
<div class="t" style="right:513px;top:391px;color:#000">21</div>
<div class="t" style="left:1089px;top:391px;color:#000">On Air...</div>
<div class="t" style="left:1139px;top:391px;color:#000">On Air...</div>
<div class="t" style="right:358px;top:391px;color:#000">844.49</div>
<div class="t" style="right:293px;top:391px;color:#000">844.49</div>
<div class="t" style="left:1309px;top:391px;color:#000">Alamo</div>
<div class="t" style="left:1384px;top:391px;color:#000">yes</div>
<div class="t" style="left:1409px;top:391px;color:#000">auto</div>
<div class="a" style="left:339px;top:391px;width:1px;height:15px;background:#d0d4d8"></div>
<div class="a" style="left:364px;top:391px;width:1px;height:15px;background:#d0d4d8"></div>
<div class="a" style="left:697px;top:391px;width:1px;height:15px;background:#d0d4d8"></div>
<div class="a" style="left:772px;top:391px;width:1px;height:15px;background:#d0d4d8"></div>
<div class="a" style="left:807px;top:391px;width:1px;height:15px;background:#d0d4d8"></div>
<div class="a" style="left:877px;top:391px;width:1px;height:15px;background:#d0d4d8"></div>
<div class="a" style="left:917px;top:391px;width:1px;height:15px;background:#d0d4d8"></div>
<div class="a" style="left:952px;top:391px;width:1px;height:15px;background:#d0d4d8"></div>
<div class="a" style="left:1022px;top:391px;width:1px;height:15px;background:#d0d4d8"></div>
<div class="a" style="left:1062px;top:391px;width:1px;height:15px;background:#d0d4d8"></div>
<div class="a" style="left:1087px;top:391px;width:1px;height:15px;background:#d0d4d8"></div>
<div class="a" style="left:1137px;top:391px;width:1px;height:15px;background:#d0d4d8"></div>
<div class="a" style="left:1187px;top:391px;width:1px;height:15px;background:#d0d4d8"></div>
<div class="a" style="left:1242px;top:391px;width:1px;height:15px;background:#d0d4d8"></div>
<div class="a" style="left:1307px;top:391px;width:1px;height:15px;background:#d0d4d8"></div>
<div class="a" style="left:1382px;top:391px;width:1px;height:15px;background:#d0d4d8"></div>
<div class="a" style="left:1407px;top:391px;width:1px;height:15px;background:#d0d4d8"></div>
<div class="a" style="left:1437px;top:391px;width:1px;height:15px;background:#d0d4d8"></div>
<div class="a" style="left:220px;top:406px;width:1218px;height:14px;background:#b4dcfe"></div>
<div class="a" style="left:220px;top:420px;width:1368px;height:1px;background:#d4d0c8"></div>
<div class="t" style="left:221px;top:406px;color:#000">Ford mustang Cabriol...</div>
<div class="t" style="right:1236px;top:406px;color:#000">4</div>
<div class="t" style="left:366px;top:406px;color:#000">Convertible(Standard) - Inclusive product</div>
<div class="t" style="left:699px;top:406px;color:#000">Flexible Car...</div>
<div class="t" style="left:774px;top:406px;color:#000">Sat</div>
<div class="t" style="left:809px;top:406px;color:#000">05/08/2017</div>
<div class="t" style="left:879px;top:406px;color:#000">14:10</div>
<div class="t" style="left:919px;top:406px;color:#000">Fri</div>
<div class="t" style="left:954px;top:406px;color:#000">25/08/2017</div>
<div class="t" style="left:1024px;top:406px;color:#000">16:30</div>
<div class="t" style="right:513px;top:406px;color:#000">21</div>
<div class="t" style="left:1089px;top:406px;color:#000">On Air...</div>
<div class="t" style="left:1139px;top:406px;color:#000">On Air...</div>
<div class="t" style="right:358px;top:406px;color:#000">844.49</div>
<div class="t" style="right:293px;top:406px;color:#000">844.49</div>
<div class="t" style="left:1309px;top:406px;color:#000">Alamo</div>
<div class="t" style="left:1384px;top:406px;color:#000">yes</div>
<div class="t" style="left:1409px;top:406px;color:#000">auto</div>
<div class="a" style="left:339px;top:406px;width:1px;height:15px;background:#d0d4d8"></div>
<div class="a" style="left:364px;top:406px;width:1px;height:15px;background:#d0d4d8"></div>
<div class="a" style="left:697px;top:406px;width:1px;height:15px;background:#d0d4d8"></div>
<div class="a" style="left:772px;top:406px;width:1px;height:15px;background:#d0d4d8"></div>
<div class="a" style="left:807px;top:406px;width:1px;height:15px;background:#d0d4d8"></div>
<div class="a" style="left:877px;top:406px;width:1px;height:15px;background:#d0d4d8"></div>
<div class="a" style="left:917px;top:406px;width:1px;height:15px;background:#d0d4d8"></div>
<div class="a" style="left:952px;top:406px;width:1px;height:15px;background:#d0d4d8"></div>
<div class="a" style="left:1022px;top:406px;width:1px;height:15px;background:#d0d4d8"></div>
<div class="a" style="left:1062px;top:406px;width:1px;height:15px;background:#d0d4d8"></div>
<div class="a" style="left:1087px;top:406px;width:1px;height:15px;background:#d0d4d8"></div>
<div class="a" style="left:1137px;top:406px;width:1px;height:15px;background:#d0d4d8"></div>
<div class="a" style="left:1187px;top:406px;width:1px;height:15px;background:#d0d4d8"></div>
<div class="a" style="left:1242px;top:406px;width:1px;height:15px;background:#d0d4d8"></div>
<div class="a" style="left:1307px;top:406px;width:1px;height:15px;background:#d0d4d8"></div>
<div class="a" style="left:1382px;top:406px;width:1px;height:15px;background:#d0d4d8"></div>
<div class="a" style="left:1407px;top:406px;width:1px;height:15px;background:#d0d4d8"></div>
<div class="a" style="left:1437px;top:406px;width:1px;height:15px;background:#d0d4d8"></div>
<div class="a" style="left:220px;top:421px;width:1368px;height:15px;background:#0a246a"></div>
<div class="t" style="left:221px;top:421px;color:#fff">Ford mustang Cabriol...</div>
<div class="t" style="right:1236px;top:421px;color:#fff">4</div>
<div class="t" style="left:366px;top:421px;color:#fff">Convertible(Standard) - Inclusive product - Plus Excess Refund</div>
<div class="t" style="left:699px;top:421px;color:#fff">Flexible Car...</div>
<div class="t" style="left:774px;top:421px;color:#fff">Sat</div>
<div class="t" style="left:809px;top:421px;color:#fff">05/08/2017</div>
<div class="t" style="left:879px;top:421px;color:#fff">14:10</div>
<div class="t" style="left:919px;top:421px;color:#fff">Fri</div>
<div class="t" style="left:954px;top:421px;color:#fff">25/08/2017</div>
<div class="t" style="left:1024px;top:421px;color:#fff">16:30</div>
<div class="t" style="right:513px;top:421px;color:#fff">21</div>
<div class="t" style="left:1089px;top:421px;color:#fff">On Air...</div>
<div class="t" style="left:1139px;top:421px;color:#fff">On Air...</div>
<div class="t" style="right:358px;top:421px;color:#fff">900.39</div>
<div class="t" style="right:293px;top:421px;color:#fff">900.39</div>
<div class="t" style="left:1309px;top:421px;color:#fff">Alamo</div>
<div class="t" style="left:1384px;top:421px;color:#fff">yes</div>
<div class="t" style="left:1409px;top:421px;color:#fff">auto</div>
<div class="a" style="left:220px;top:436px;width:1218px;height:14px;background:#b4dcfe"></div>
<div class="a" style="left:220px;top:450px;width:1368px;height:1px;background:#d4d0c8"></div>
<div class="t" style="left:221px;top:436px;color:#000">Ford mustang Cabriol...</div>
<div class="t" style="right:1236px;top:436px;color:#000">4</div>
<div class="t" style="left:366px;top:436px;color:#000">Convertible(Standard) - Inclusive product - Plus Excess Refund</div>
<div class="t" style="left:699px;top:436px;color:#000">Flexible Car...</div>
<div class="t" style="left:774px;top:436px;color:#000">Sat</div>
<div class="t" style="left:809px;top:436px;color:#000">05/08/2017</div>
<div class="t" style="left:879px;top:436px;color:#000">14:10</div>
<div class="t" style="left:919px;top:436px;color:#000">Fri</div>
<div class="t" style="left:954px;top:436px;color:#000">25/08/2017</div>
<div class="t" style="left:1024px;top:436px;color:#000">16:30</div>
<div class="t" style="right:513px;top:436px;color:#000">21</div>
<div class="t" style="left:1089px;top:436px;color:#000">On Air...</div>
<div class="t" style="left:1139px;top:436px;color:#000">On Air...</div>
<div class="t" style="right:358px;top:436px;color:#000">900.39</div>
<div class="t" style="right:293px;top:436px;color:#000">900.39</div>
<div class="t" style="left:1309px;top:436px;color:#000">Alamo</div>
<div class="t" style="left:1384px;top:436px;color:#000">yes</div>
<div class="t" style="left:1409px;top:436px;color:#000">auto</div>
<div class="a" style="left:339px;top:436px;width:1px;height:15px;background:#d0d4d8"></div>
<div class="a" style="left:364px;top:436px;width:1px;height:15px;background:#d0d4d8"></div>
<div class="a" style="left:697px;top:436px;width:1px;height:15px;background:#d0d4d8"></div>
<div class="a" style="left:772px;top:436px;width:1px;height:15px;background:#d0d4d8"></div>
<div class="a" style="left:807px;top:436px;width:1px;height:15px;background:#d0d4d8"></div>
<div class="a" style="left:877px;top:436px;width:1px;height:15px;background:#d0d4d8"></div>
<div class="a" style="left:917px;top:436px;width:1px;height:15px;background:#d0d4d8"></div>
<div class="a" style="left:952px;top:436px;width:1px;height:15px;background:#d0d4d8"></div>
<div class="a" style="left:1022px;top:436px;width:1px;height:15px;background:#d0d4d8"></div>
<div class="a" style="left:1062px;top:436px;width:1px;height:15px;background:#d0d4d8"></div>
<div class="a" style="left:1087px;top:436px;width:1px;height:15px;background:#d0d4d8"></div>
<div class="a" style="left:1137px;top:436px;width:1px;height:15px;background:#d0d4d8"></div>
<div class="a" style="left:1187px;top:436px;width:1px;height:15px;background:#d0d4d8"></div>
<div class="a" style="left:1242px;top:436px;width:1px;height:15px;background:#d0d4d8"></div>
<div class="a" style="left:1307px;top:436px;width:1px;height:15px;background:#d0d4d8"></div>
<div class="a" style="left:1382px;top:436px;width:1px;height:15px;background:#d0d4d8"></div>
<div class="a" style="left:1407px;top:436px;width:1px;height:15px;background:#d0d4d8"></div>
<div class="a" style="left:1437px;top:436px;width:1px;height:15px;background:#d0d4d8"></div>
<div class="a" style="left:220px;top:451px;width:1218px;height:14px;background:#b4dcfe"></div>
<div class="a" style="left:220px;top:465px;width:1368px;height:1px;background:#d4d0c8"></div>
<div class="t" style="left:221px;top:451px;color:#000">Ford mustang Cabriol...</div>
<div class="t" style="right:1236px;top:451px;color:#000">4</div>
<div class="t" style="left:366px;top:451px;color:#000">Convertible(Standard) - Gold</div>
<div class="t" style="left:699px;top:451px;color:#000">Flexible Car...</div>
<div class="t" style="left:774px;top:451px;color:#000">Sat</div>
<div class="t" style="left:809px;top:451px;color:#000">05/08/2017</div>
<div class="t" style="left:879px;top:451px;color:#000">14:10</div>
<div class="t" style="left:919px;top:451px;color:#000">Fri</div>
<div class="t" style="left:954px;top:451px;color:#000">25/08/2017</div>
<div class="t" style="left:1024px;top:451px;color:#000">16:30</div>
<div class="t" style="right:513px;top:451px;color:#000">21</div>
<div class="t" style="left:1089px;top:451px;color:#000">On Air...</div>
<div class="t" style="left:1139px;top:451px;color:#000">On Air...</div>
<div class="t" style="right:358px;top:451px;color:#000">900.50</div>
<div class="t" style="right:293px;top:451px;color:#000">900.50</div>
<div class="t" style="left:1309px;top:451px;color:#000">Alamo</div>
<div class="t" style="left:1384px;top:451px;color:#000">yes</div>
<div class="t" style="left:1409px;top:451px;color:#000">auto</div>
<div class="a" style="left:339px;top:451px;width:1px;height:15px;background:#d0d4d8"></div>
<div class="a" style="left:364px;top:451px;width:1px;height:15px;background:#d0d4d8"></div>
<div class="a" style="left:697px;top:451px;width:1px;height:15px;background:#d0d4d8"></div>
<div class="a" style="left:772px;top:451px;width:1px;height:15px;background:#d0d4d8"></div>
<div class="a" style="left:807px;top:451px;width:1px;height:15px;background:#d0d4d8"></div>
<div class="a" style="left:877px;top:451px;width:1px;height:15px;background:#d0d4d8"></div>
<div class="a" style="left:917px;top:451px;width:1px;height:15px;background:#d0d4d8"></div>
<div class="a" style="left:952px;top:451px;width:1px;height:15px;background:#d0d4d8"></div>
<div class="a" style="left:1022px;top:451px;width:1px;height:15px;background:#d0d4d8"></div>
<div class="a" style="left:1062px;top:451px;width:1px;height:15px;background:#d0d4d8"></div>
<div class="a" style="left:1087px;top:451px;width:1px;height:15px;background:#d0d4d8"></div>
<div class="a" style="left:1137px;top:451px;width:1px;height:15px;background:#d0d4d8"></div>
<div class="a" style="left:1187px;top:451px;width:1px;height:15px;background:#d0d4d8"></div>
<div class="a" style="left:1242px;top:451px;width:1px;height:15px;background:#d0d4d8"></div>
<div class="a" style="left:1307px;top:451px;width:1px;height:15px;background:#d0d4d8"></div>
<div class="a" style="left:1382px;top:451px;width:1px;height:15px;background:#d0d4d8"></div>
<div class="a" style="left:1407px;top:451px;width:1px;height:15px;background:#d0d4d8"></div>
<div class="a" style="left:1437px;top:451px;width:1px;height:15px;background:#d0d4d8"></div>
<div class="a" style="left:220px;top:466px;width:1218px;height:14px;background:#b4dcfe"></div>
<div class="a" style="left:220px;top:480px;width:1368px;height:1px;background:#d4d0c8"></div>
<div class="t" style="left:221px;top:466px;color:#000">Ford mustang Cabriol...</div>
<div class="t" style="right:1236px;top:466px;color:#000">4</div>
<div class="t" style="left:366px;top:466px;color:#000">Convertible(Standard) - Gold</div>
<div class="t" style="left:699px;top:466px;color:#000">Flexible Car...</div>
<div class="t" style="left:774px;top:466px;color:#000">Sat</div>
<div class="t" style="left:809px;top:466px;color:#000">05/08/2017</div>
<div class="t" style="left:879px;top:466px;color:#000">14:10</div>
<div class="t" style="left:919px;top:466px;color:#000">Fri</div>
<div class="t" style="left:954px;top:466px;color:#000">25/08/2017</div>
<div class="t" style="left:1024px;top:466px;color:#000">16:30</div>
<div class="t" style="right:513px;top:466px;color:#000">21</div>
<div class="t" style="left:1089px;top:466px;color:#000">On Air...</div>
<div class="t" style="left:1139px;top:466px;color:#000">On Air...</div>
<div class="t" style="right:358px;top:466px;color:#000">900.50</div>
<div class="t" style="right:293px;top:466px;color:#000">900.50</div>
<div class="t" style="left:1309px;top:466px;color:#000">Alamo</div>
<div class="t" style="left:1384px;top:466px;color:#000">yes</div>
<div class="t" style="left:1409px;top:466px;color:#000">auto</div>
<div class="a" style="left:339px;top:466px;width:1px;height:15px;background:#d0d4d8"></div>
<div class="a" style="left:364px;top:466px;width:1px;height:15px;background:#d0d4d8"></div>
<div class="a" style="left:697px;top:466px;width:1px;height:15px;background:#d0d4d8"></div>
<div class="a" style="left:772px;top:466px;width:1px;height:15px;background:#d0d4d8"></div>
<div class="a" style="left:807px;top:466px;width:1px;height:15px;background:#d0d4d8"></div>
<div class="a" style="left:877px;top:466px;width:1px;height:15px;background:#d0d4d8"></div>
<div class="a" style="left:917px;top:466px;width:1px;height:15px;background:#d0d4d8"></div>
<div class="a" style="left:952px;top:466px;width:1px;height:15px;background:#d0d4d8"></div>
<div class="a" style="left:1022px;top:466px;width:1px;height:15px;background:#d0d4d8"></div>
<div class="a" style="left:1062px;top:466px;width:1px;height:15px;background:#d0d4d8"></div>
<div class="a" style="left:1087px;top:466px;width:1px;height:15px;background:#d0d4d8"></div>
<div class="a" style="left:1137px;top:466px;width:1px;height:15px;background:#d0d4d8"></div>
<div class="a" style="left:1187px;top:466px;width:1px;height:15px;background:#d0d4d8"></div>
<div class="a" style="left:1242px;top:466px;width:1px;height:15px;background:#d0d4d8"></div>
<div class="a" style="left:1307px;top:466px;width:1px;height:15px;background:#d0d4d8"></div>
<div class="a" style="left:1382px;top:466px;width:1px;height:15px;background:#d0d4d8"></div>
<div class="a" style="left:1407px;top:466px;width:1px;height:15px;background:#d0d4d8"></div>
<div class="a" style="left:1437px;top:466px;width:1px;height:15px;background:#d0d4d8"></div>
<div class="a" style="left:220px;top:481px;width:1218px;height:14px;background:#b4dcfe"></div>
<div class="a" style="left:220px;top:495px;width:1368px;height:1px;background:#d4d0c8"></div>
<div class="t" style="left:221px;top:481px;color:#000">Ford mustang Cabriol...</div>
<div class="t" style="right:1236px;top:481px;color:#000">4</div>
<div class="t" style="left:366px;top:481px;color:#000">Convertible(Standard) - Gold - Plus Excess Refund</div>
<div class="t" style="left:699px;top:481px;color:#000">Flexible Car...</div>
<div class="t" style="left:774px;top:481px;color:#000">Sat</div>
<div class="t" style="left:809px;top:481px;color:#000">05/08/2017</div>
<div class="t" style="left:879px;top:481px;color:#000">14:10</div>
<div class="t" style="left:919px;top:481px;color:#000">Fri</div>
<div class="t" style="left:954px;top:481px;color:#000">25/08/2017</div>
<div class="t" style="left:1024px;top:481px;color:#000">16:30</div>
<div class="t" style="right:513px;top:481px;color:#000">21</div>
<div class="t" style="left:1089px;top:481px;color:#000">On Air...</div>
<div class="t" style="left:1139px;top:481px;color:#000">On Air...</div>
<div class="t" style="right:358px;top:481px;color:#000">956.41</div>
<div class="t" style="right:293px;top:481px;color:#000">956.41</div>
<div class="t" style="left:1309px;top:481px;color:#000">Alamo</div>
<div class="t" style="left:1384px;top:481px;color:#000">yes</div>
<div class="t" style="left:1409px;top:481px;color:#000">auto</div>
<div class="a" style="left:339px;top:481px;width:1px;height:15px;background:#d0d4d8"></div>
<div class="a" style="left:364px;top:481px;width:1px;height:15px;background:#d0d4d8"></div>
<div class="a" style="left:697px;top:481px;width:1px;height:15px;background:#d0d4d8"></div>
<div class="a" style="left:772px;top:481px;width:1px;height:15px;background:#d0d4d8"></div>
<div class="a" style="left:807px;top:481px;width:1px;height:15px;background:#d0d4d8"></div>
<div class="a" style="left:877px;top:481px;width:1px;height:15px;background:#d0d4d8"></div>
<div class="a" style="left:917px;top:481px;width:1px;height:15px;background:#d0d4d8"></div>
<div class="a" style="left:952px;top:481px;width:1px;height:15px;background:#d0d4d8"></div>
<div class="a" style="left:1022px;top:481px;width:1px;height:15px;background:#d0d4d8"></div>
<div class="a" style="left:1062px;top:481px;width:1px;height:15px;background:#d0d4d8"></div>
<div class="a" style="left:1087px;top:481px;width:1px;height:15px;background:#d0d4d8"></div>
<div class="a" style="left:1137px;top:481px;width:1px;height:15px;background:#d0d4d8"></div>
<div class="a" style="left:1187px;top:481px;width:1px;height:15px;background:#d0d4d8"></div>
<div class="a" style="left:1242px;top:481px;width:1px;height:15px;background:#d0d4d8"></div>
<div class="a" style="left:1307px;top:481px;width:1px;height:15px;background:#d0d4d8"></div>
<div class="a" style="left:1382px;top:481px;width:1px;height:15px;background:#d0d4d8"></div>
<div class="a" style="left:1407px;top:481px;width:1px;height:15px;background:#d0d4d8"></div>
<div class="a" style="left:1437px;top:481px;width:1px;height:15px;background:#d0d4d8"></div>
<div class="a" style="left:220px;top:496px;width:1218px;height:14px;background:#b4dcfe"></div>
<div class="a" style="left:220px;top:510px;width:1368px;height:1px;background:#d4d0c8"></div>
<div class="t" style="left:221px;top:496px;color:#000">Ford mustang Cabriol...</div>
<div class="t" style="right:1236px;top:496px;color:#000">4</div>
<div class="t" style="left:366px;top:496px;color:#000">Convertible(Standard) - Gold - Plus Excess Refund</div>
<div class="t" style="left:699px;top:496px;color:#000">Flexible Car...</div>
<div class="t" style="left:774px;top:496px;color:#000">Sat</div>
<div class="t" style="left:809px;top:496px;color:#000">05/08/2017</div>
<div class="t" style="left:879px;top:496px;color:#000">14:10</div>
<div class="t" style="left:919px;top:496px;color:#000">Fri</div>
<div class="t" style="left:954px;top:496px;color:#000">25/08/2017</div>
<div class="t" style="left:1024px;top:496px;color:#000">16:30</div>
<div class="t" style="right:513px;top:496px;color:#000">21</div>
<div class="t" style="left:1089px;top:496px;color:#000">On Air...</div>
<div class="t" style="left:1139px;top:496px;color:#000">On Air...</div>
<div class="t" style="right:358px;top:496px;color:#000">956.41</div>
<div class="t" style="right:293px;top:496px;color:#000">956.41</div>
<div class="t" style="left:1309px;top:496px;color:#000">Alamo</div>
<div class="t" style="left:1384px;top:496px;color:#000">yes</div>
<div class="t" style="left:1409px;top:496px;color:#000">auto</div>
<div class="a" style="left:339px;top:496px;width:1px;height:15px;background:#d0d4d8"></div>
<div class="a" style="left:364px;top:496px;width:1px;height:15px;background:#d0d4d8"></div>
<div class="a" style="left:697px;top:496px;width:1px;height:15px;background:#d0d4d8"></div>
<div class="a" style="left:772px;top:496px;width:1px;height:15px;background:#d0d4d8"></div>
<div class="a" style="left:807px;top:496px;width:1px;height:15px;background:#d0d4d8"></div>
<div class="a" style="left:877px;top:496px;width:1px;height:15px;background:#d0d4d8"></div>
<div class="a" style="left:917px;top:496px;width:1px;height:15px;background:#d0d4d8"></div>
<div class="a" style="left:952px;top:496px;width:1px;height:15px;background:#d0d4d8"></div>
<div class="a" style="left:1022px;top:496px;width:1px;height:15px;background:#d0d4d8"></div>
<div class="a" style="left:1062px;top:496px;width:1px;height:15px;background:#d0d4d8"></div>
<div class="a" style="left:1087px;top:496px;width:1px;height:15px;background:#d0d4d8"></div>
<div class="a" style="left:1137px;top:496px;width:1px;height:15px;background:#d0d4d8"></div>
<div class="a" style="left:1187px;top:496px;width:1px;height:15px;background:#d0d4d8"></div>
<div class="a" style="left:1242px;top:496px;width:1px;height:15px;background:#d0d4d8"></div>
<div class="a" style="left:1307px;top:496px;width:1px;height:15px;background:#d0d4d8"></div>
<div class="a" style="left:1382px;top:496px;width:1px;height:15px;background:#d0d4d8"></div>
<div class="a" style="left:1407px;top:496px;width:1px;height:15px;background:#d0d4d8"></div>
<div class="a" style="left:1437px;top:496px;width:1px;height:15px;background:#d0d4d8"></div>
<div class="a" style="left:220px;top:511px;width:1218px;height:14px;background:#b4dcfe"></div>
<div class="a" style="left:220px;top:525px;width:1368px;height:1px;background:#d4d0c8"></div>
<div class="t" style="left:221px;top:511px;color:#000">Ford mustang Cabriol...</div>
<div class="t" style="right:1236px;top:511px;color:#000">4</div>
<div class="t" style="left:366px;top:511px;color:#000">Convertible(Standard) - Inclusive GPS</div>
<div class="t" style="left:699px;top:511px;color:#000">Flexible Car...</div>
<div class="t" style="left:774px;top:511px;color:#000">Sat</div>
<div class="t" style="left:809px;top:511px;color:#000">05/08/2017</div>
<div class="t" style="left:879px;top:511px;color:#000">14:10</div>
<div class="t" style="left:919px;top:511px;color:#000">Fri</div>
<div class="t" style="left:954px;top:511px;color:#000">25/08/2017</div>
<div class="t" style="left:1024px;top:511px;color:#000">16:30</div>
<div class="t" style="right:513px;top:511px;color:#000">21</div>
<div class="t" style="left:1089px;top:511px;color:#000">On Air...</div>
<div class="t" style="left:1139px;top:511px;color:#000">On Air...</div>
<div class="t" style="right:358px;top:511px;color:#000">979.44</div>
<div class="t" style="right:293px;top:511px;color:#000">979.44</div>
<div class="t" style="left:1309px;top:511px;color:#000">Alamo</div>
<div class="t" style="left:1384px;top:511px;color:#000">yes</div>
<div class="t" style="left:1409px;top:511px;color:#000">auto</div>
<div class="a" style="left:339px;top:511px;width:1px;height:15px;background:#d0d4d8"></div>
<div class="a" style="left:364px;top:511px;width:1px;height:15px;background:#d0d4d8"></div>
<div class="a" style="left:697px;top:511px;width:1px;height:15px;background:#d0d4d8"></div>
<div class="a" style="left:772px;top:511px;width:1px;height:15px;background:#d0d4d8"></div>
<div class="a" style="left:807px;top:511px;width:1px;height:15px;background:#d0d4d8"></div>
<div class="a" style="left:877px;top:511px;width:1px;height:15px;background:#d0d4d8"></div>
<div class="a" style="left:917px;top:511px;width:1px;height:15px;background:#d0d4d8"></div>
<div class="a" style="left:952px;top:511px;width:1px;height:15px;background:#d0d4d8"></div>
<div class="a" style="left:1022px;top:511px;width:1px;height:15px;background:#d0d4d8"></div>
<div class="a" style="left:1062px;top:511px;width:1px;height:15px;background:#d0d4d8"></div>
<div class="a" style="left:1087px;top:511px;width:1px;height:15px;background:#d0d4d8"></div>
<div class="a" style="left:1137px;top:511px;width:1px;height:15px;background:#d0d4d8"></div>
<div class="a" style="left:1187px;top:511px;width:1px;height:15px;background:#d0d4d8"></div>
<div class="a" style="left:1242px;top:511px;width:1px;height:15px;background:#d0d4d8"></div>
<div class="a" style="left:1307px;top:511px;width:1px;height:15px;background:#d0d4d8"></div>
<div class="a" style="left:1382px;top:511px;width:1px;height:15px;background:#d0d4d8"></div>
<div class="a" style="left:1407px;top:511px;width:1px;height:15px;background:#d0d4d8"></div>
<div class="a" style="left:1437px;top:511px;width:1px;height:15px;background:#d0d4d8"></div>
<div class="a" style="left:220px;top:526px;width:1218px;height:14px;background:#b4dcfe"></div>
<div class="a" style="left:220px;top:540px;width:1368px;height:1px;background:#d4d0c8"></div>
<div class="t" style="left:221px;top:526px;color:#000">Ford mustang Cabriol...</div>
<div class="t" style="right:1236px;top:526px;color:#000">4</div>
<div class="t" style="left:366px;top:526px;color:#000">Convertible(Standard) - Inclusive GPS</div>
<div class="t" style="left:699px;top:526px;color:#000">Flexible Car...</div>
<div class="t" style="left:774px;top:526px;color:#000">Sat</div>
<div class="t" style="left:809px;top:526px;color:#000">05/08/2017</div>
<div class="t" style="left:879px;top:526px;color:#000">14:10</div>
<div class="t" style="left:919px;top:526px;color:#000">Fri</div>
<div class="t" style="left:954px;top:526px;color:#000">25/08/2017</div>
<div class="t" style="left:1024px;top:526px;color:#000">16:30</div>
<div class="t" style="right:513px;top:526px;color:#000">21</div>
<div class="t" style="left:1089px;top:526px;color:#000">On Air...</div>
<div class="t" style="left:1139px;top:526px;color:#000">On Air...</div>
<div class="t" style="right:358px;top:526px;color:#000">979.44</div>
<div class="t" style="right:293px;top:526px;color:#000">979.44</div>
<div class="t" style="left:1309px;top:526px;color:#000">Alamo</div>
<div class="t" style="left:1384px;top:526px;color:#000">yes</div>
<div class="t" style="left:1409px;top:526px;color:#000">auto</div>
<div class="a" style="left:339px;top:526px;width:1px;height:15px;background:#d0d4d8"></div>
<div class="a" style="left:364px;top:526px;width:1px;height:15px;background:#d0d4d8"></div>
<div class="a" style="left:697px;top:526px;width:1px;height:15px;background:#d0d4d8"></div>
<div class="a" style="left:772px;top:526px;width:1px;height:15px;background:#d0d4d8"></div>
<div class="a" style="left:807px;top:526px;width:1px;height:15px;background:#d0d4d8"></div>
<div class="a" style="left:877px;top:526px;width:1px;height:15px;background:#d0d4d8"></div>
<div class="a" style="left:917px;top:526px;width:1px;height:15px;background:#d0d4d8"></div>
<div class="a" style="left:952px;top:526px;width:1px;height:15px;background:#d0d4d8"></div>
<div class="a" style="left:1022px;top:526px;width:1px;height:15px;background:#d0d4d8"></div>
<div class="a" style="left:1062px;top:526px;width:1px;height:15px;background:#d0d4d8"></div>
<div class="a" style="left:1087px;top:526px;width:1px;height:15px;background:#d0d4d8"></div>
<div class="a" style="left:1137px;top:526px;width:1px;height:15px;background:#d0d4d8"></div>
<div class="a" style="left:1187px;top:526px;width:1px;height:15px;background:#d0d4d8"></div>
<div class="a" style="left:1242px;top:526px;width:1px;height:15px;background:#d0d4d8"></div>
<div class="a" style="left:1307px;top:526px;width:1px;height:15px;background:#d0d4d8"></div>
<div class="a" style="left:1382px;top:526px;width:1px;height:15px;background:#d0d4d8"></div>
<div class="a" style="left:1407px;top:526px;width:1px;height:15px;background:#d0d4d8"></div>
<div class="a" style="left:1437px;top:526px;width:1px;height:15px;background:#d0d4d8"></div>
<div class="a" style="left:220px;top:541px;width:1218px;height:14px;background:#b4dcfe"></div>
<div class="a" style="left:220px;top:555px;width:1368px;height:1px;background:#d4d0c8"></div>
<div class="t" style="left:221px;top:541px;color:#000">Ford mustang Cabriol...</div>
<div class="t" style="right:1236px;top:541px;color:#000">4</div>
<div class="t" style="left:366px;top:541px;color:#000">Convertible(Standard) - Inclusive GPS - Plus Excess Refund</div>
<div class="t" style="left:699px;top:541px;color:#000">Flexible Car...</div>
<div class="t" style="left:774px;top:541px;color:#000">Sat</div>
<div class="t" style="left:809px;top:541px;color:#000">05/08/2017</div>
<div class="t" style="left:879px;top:541px;color:#000">14:10</div>
<div class="t" style="left:919px;top:541px;color:#000">Fri</div>
<div class="t" style="left:954px;top:541px;color:#000">25/08/2017</div>
<div class="t" style="left:1024px;top:541px;color:#000">16:30</div>
<div class="t" style="right:513px;top:541px;color:#000">21</div>
<div class="t" style="left:1089px;top:541px;color:#000">On Air...</div>
<div class="t" style="left:1139px;top:541px;color:#000">On Air...</div>
<div class="t" style="right:358px;top:541px;color:#000">1,035.34</div>
<div class="t" style="right:293px;top:541px;color:#000">1,035.34</div>
<div class="t" style="left:1309px;top:541px;color:#000">Alamo</div>
<div class="t" style="left:1384px;top:541px;color:#000">yes</div>
<div class="t" style="left:1409px;top:541px;color:#000">auto</div>
<div class="a" style="left:339px;top:541px;width:1px;height:15px;background:#d0d4d8"></div>
<div class="a" style="left:364px;top:541px;width:1px;height:15px;background:#d0d4d8"></div>
<div class="a" style="left:697px;top:541px;width:1px;height:15px;background:#d0d4d8"></div>
<div class="a" style="left:772px;top:541px;width:1px;height:15px;background:#d0d4d8"></div>
<div class="a" style="left:807px;top:541px;width:1px;height:15px;background:#d0d4d8"></div>
<div class="a" style="left:877px;top:541px;width:1px;height:15px;background:#d0d4d8"></div>
<div class="a" style="left:917px;top:541px;width:1px;height:15px;background:#d0d4d8"></div>
<div class="a" style="left:952px;top:541px;width:1px;height:15px;background:#d0d4d8"></div>
<div class="a" style="left:1022px;top:541px;width:1px;height:15px;background:#d0d4d8"></div>
<div class="a" style="left:1062px;top:541px;width:1px;height:15px;background:#d0d4d8"></div>
<div class="a" style="left:1087px;top:541px;width:1px;height:15px;background:#d0d4d8"></div>
<div class="a" style="left:1137px;top:541px;width:1px;height:15px;background:#d0d4d8"></div>
<div class="a" style="left:1187px;top:541px;width:1px;height:15px;background:#d0d4d8"></div>
<div class="a" style="left:1242px;top:541px;width:1px;height:15px;background:#d0d4d8"></div>
<div class="a" style="left:1307px;top:541px;width:1px;height:15px;background:#d0d4d8"></div>
<div class="a" style="left:1382px;top:541px;width:1px;height:15px;background:#d0d4d8"></div>
<div class="a" style="left:1407px;top:541px;width:1px;height:15px;background:#d0d4d8"></div>
<div class="a" style="left:1437px;top:541px;width:1px;height:15px;background:#d0d4d8"></div>
<div class="a" style="left:220px;top:556px;width:1218px;height:14px;background:#b4dcfe"></div>
<div class="a" style="left:220px;top:570px;width:1368px;height:1px;background:#d4d0c8"></div>
<div class="t" style="left:221px;top:556px;color:#000">Ford mustang Cabriol...</div>
<div class="t" style="right:1236px;top:556px;color:#000">4</div>
<div class="t" style="left:366px;top:556px;color:#000">Convertible(Standard) - Inclusive GPS - Plus Excess Refund</div>
<div class="t" style="left:699px;top:556px;color:#000">Flexible Car...</div>
<div class="t" style="left:774px;top:556px;color:#000">Sat</div>
<div class="t" style="left:809px;top:556px;color:#000">05/08/2017</div>
<div class="t" style="left:879px;top:556px;color:#000">14:10</div>
<div class="t" style="left:919px;top:556px;color:#000">Fri</div>
<div class="t" style="left:954px;top:556px;color:#000">25/08/2017</div>
<div class="t" style="left:1024px;top:556px;color:#000">16:30</div>
<div class="t" style="right:513px;top:556px;color:#000">21</div>
<div class="t" style="left:1089px;top:556px;color:#000">On Air...</div>
<div class="t" style="left:1139px;top:556px;color:#000">On Air...</div>
<div class="t" style="right:358px;top:556px;color:#000">1,035.34</div>
<div class="t" style="right:293px;top:556px;color:#000">1,035.34</div>
<div class="t" style="left:1309px;top:556px;color:#000">Alamo</div>
<div class="t" style="left:1384px;top:556px;color:#000">yes</div>
<div class="t" style="left:1409px;top:556px;color:#000">auto</div>
<div class="a" style="left:339px;top:556px;width:1px;height:15px;background:#d0d4d8"></div>
<div class="a" style="left:364px;top:556px;width:1px;height:15px;background:#d0d4d8"></div>
<div class="a" style="left:697px;top:556px;width:1px;height:15px;background:#d0d4d8"></div>
<div class="a" style="left:772px;top:556px;width:1px;height:15px;background:#d0d4d8"></div>
<div class="a" style="left:807px;top:556px;width:1px;height:15px;background:#d0d4d8"></div>
<div class="a" style="left:877px;top:556px;width:1px;height:15px;background:#d0d4d8"></div>
<div class="a" style="left:917px;top:556px;width:1px;height:15px;background:#d0d4d8"></div>
<div class="a" style="left:952px;top:556px;width:1px;height:15px;background:#d0d4d8"></div>
<div class="a" style="left:1022px;top:556px;width:1px;height:15px;background:#d0d4d8"></div>
<div class="a" style="left:1062px;top:556px;width:1px;height:15px;background:#d0d4d8"></div>
<div class="a" style="left:1087px;top:556px;width:1px;height:15px;background:#d0d4d8"></div>
<div class="a" style="left:1137px;top:556px;width:1px;height:15px;background:#d0d4d8"></div>
<div class="a" style="left:1187px;top:556px;width:1px;height:15px;background:#d0d4d8"></div>
<div class="a" style="left:1242px;top:556px;width:1px;height:15px;background:#d0d4d8"></div>
<div class="a" style="left:1307px;top:556px;width:1px;height:15px;background:#d0d4d8"></div>
<div class="a" style="left:1382px;top:556px;width:1px;height:15px;background:#d0d4d8"></div>
<div class="a" style="left:1407px;top:556px;width:1px;height:15px;background:#d0d4d8"></div>
<div class="a" style="left:1437px;top:556px;width:1px;height:15px;background:#d0d4d8"></div>
<div class="a" style="left:220px;top:571px;width:1218px;height:14px;background:#b4dcfe"></div>
<div class="a" style="left:220px;top:585px;width:1368px;height:1px;background:#d4d0c8"></div>
<div class="t" style="left:221px;top:571px;color:#000">Ford mustang Cabriol...</div>
<div class="t" style="right:1236px;top:571px;color:#000">4</div>
<div class="t" style="left:366px;top:571px;color:#000">Convertible(Standard) - Gold GPS</div>
<div class="t" style="left:699px;top:571px;color:#000">Flexible Car...</div>
<div class="t" style="left:774px;top:571px;color:#000">Sat</div>
<div class="t" style="left:809px;top:571px;color:#000">05/08/2017</div>
<div class="t" style="left:879px;top:571px;color:#000">14:10</div>
<div class="t" style="left:919px;top:571px;color:#000">Fri</div>
<div class="t" style="left:954px;top:571px;color:#000">25/08/2017</div>
<div class="t" style="left:1024px;top:571px;color:#000">16:30</div>
<div class="t" style="right:513px;top:571px;color:#000">21</div>
<div class="t" style="left:1089px;top:571px;color:#000">On Air...</div>
<div class="t" style="left:1139px;top:571px;color:#000">On Air...</div>
<div class="t" style="right:358px;top:571px;color:#000">1,045.63</div>
<div class="t" style="right:293px;top:571px;color:#000">1,045.63</div>
<div class="t" style="left:1309px;top:571px;color:#000">Alamo</div>
<div class="t" style="left:1384px;top:571px;color:#000">yes</div>
<div class="t" style="left:1409px;top:571px;color:#000">auto</div>
<div class="a" style="left:339px;top:571px;width:1px;height:15px;background:#d0d4d8"></div>
<div class="a" style="left:364px;top:571px;width:1px;height:15px;background:#d0d4d8"></div>
<div class="a" style="left:697px;top:571px;width:1px;height:15px;background:#d0d4d8"></div>
<div class="a" style="left:772px;top:571px;width:1px;height:15px;background:#d0d4d8"></div>
<div class="a" style="left:807px;top:571px;width:1px;height:15px;background:#d0d4d8"></div>
<div class="a" style="left:877px;top:571px;width:1px;height:15px;background:#d0d4d8"></div>
<div class="a" style="left:917px;top:571px;width:1px;height:15px;background:#d0d4d8"></div>
<div class="a" style="left:952px;top:571px;width:1px;height:15px;background:#d0d4d8"></div>
<div class="a" style="left:1022px;top:571px;width:1px;height:15px;background:#d0d4d8"></div>
<div class="a" style="left:1062px;top:571px;width:1px;height:15px;background:#d0d4d8"></div>
<div class="a" style="left:1087px;top:571px;width:1px;height:15px;background:#d0d4d8"></div>
<div class="a" style="left:1137px;top:571px;width:1px;height:15px;background:#d0d4d8"></div>
<div class="a" style="left:1187px;top:571px;width:1px;height:15px;background:#d0d4d8"></div>
<div class="a" style="left:1242px;top:571px;width:1px;height:15px;background:#d0d4d8"></div>
<div class="a" style="left:1307px;top:571px;width:1px;height:15px;background:#d0d4d8"></div>
<div class="a" style="left:1382px;top:571px;width:1px;height:15px;background:#d0d4d8"></div>
<div class="a" style="left:1407px;top:571px;width:1px;height:15px;background:#d0d4d8"></div>
<div class="a" style="left:1437px;top:571px;width:1px;height:15px;background:#d0d4d8"></div>
<div class="a" style="left:220px;top:586px;width:1218px;height:14px;background:#b4dcfe"></div>
<div class="a" style="left:220px;top:600px;width:1368px;height:1px;background:#d4d0c8"></div>
<div class="t" style="left:221px;top:586px;color:#000">Ford mustang Cabriol...</div>
<div class="t" style="right:1236px;top:586px;color:#000">4</div>
<div class="t" style="left:366px;top:586px;color:#000">Convertible(Standard) - Gold GPS</div>
<div class="t" style="left:699px;top:586px;color:#000">Flexible Car...</div>
<div class="t" style="left:774px;top:586px;color:#000">Sat</div>
<div class="t" style="left:809px;top:586px;color:#000">05/08/2017</div>
<div class="t" style="left:879px;top:586px;color:#000">14:10</div>
<div class="t" style="left:919px;top:586px;color:#000">Fri</div>
<div class="t" style="left:954px;top:586px;color:#000">25/08/2017</div>
<div class="t" style="left:1024px;top:586px;color:#000">16:30</div>
<div class="t" style="right:513px;top:586px;color:#000">21</div>
<div class="t" style="left:1089px;top:586px;color:#000">On Air...</div>
<div class="t" style="left:1139px;top:586px;color:#000">On Air...</div>
<div class="t" style="right:358px;top:586px;color:#000">1,045.63</div>
<div class="t" style="right:293px;top:586px;color:#000">1,045.63</div>
<div class="t" style="left:1309px;top:586px;color:#000">Alamo</div>
<div class="t" style="left:1384px;top:586px;color:#000">yes</div>
<div class="t" style="left:1409px;top:586px;color:#000">auto</div>
<div class="a" style="left:339px;top:586px;width:1px;height:15px;background:#d0d4d8"></div>
<div class="a" style="left:364px;top:586px;width:1px;height:15px;background:#d0d4d8"></div>
<div class="a" style="left:697px;top:586px;width:1px;height:15px;background:#d0d4d8"></div>
<div class="a" style="left:772px;top:586px;width:1px;height:15px;background:#d0d4d8"></div>
<div class="a" style="left:807px;top:586px;width:1px;height:15px;background:#d0d4d8"></div>
<div class="a" style="left:877px;top:586px;width:1px;height:15px;background:#d0d4d8"></div>
<div class="a" style="left:917px;top:586px;width:1px;height:15px;background:#d0d4d8"></div>
<div class="a" style="left:952px;top:586px;width:1px;height:15px;background:#d0d4d8"></div>
<div class="a" style="left:1022px;top:586px;width:1px;height:15px;background:#d0d4d8"></div>
<div class="a" style="left:1062px;top:586px;width:1px;height:15px;background:#d0d4d8"></div>
<div class="a" style="left:1087px;top:586px;width:1px;height:15px;background:#d0d4d8"></div>
<div class="a" style="left:1137px;top:586px;width:1px;height:15px;background:#d0d4d8"></div>
<div class="a" style="left:1187px;top:586px;width:1px;height:15px;background:#d0d4d8"></div>
<div class="a" style="left:1242px;top:586px;width:1px;height:15px;background:#d0d4d8"></div>
<div class="a" style="left:1307px;top:586px;width:1px;height:15px;background:#d0d4d8"></div>
<div class="a" style="left:1382px;top:586px;width:1px;height:15px;background:#d0d4d8"></div>
<div class="a" style="left:1407px;top:586px;width:1px;height:15px;background:#d0d4d8"></div>
<div class="a" style="left:1437px;top:586px;width:1px;height:15px;background:#d0d4d8"></div>
<div class="a" style="left:220px;top:601px;width:1218px;height:14px;background:#b4dcfe"></div>
<div class="a" style="left:220px;top:615px;width:1368px;height:1px;background:#d4d0c8"></div>
<div class="t" style="left:221px;top:601px;color:#000">Ford mustang Cabriol...</div>
<div class="t" style="right:1236px;top:601px;color:#000">4</div>
<div class="t" style="left:366px;top:601px;color:#000">Convertible(Standard) - Gold GPS - Plus Excess Refund</div>
<div class="t" style="left:699px;top:601px;color:#000">Flexible Car...</div>
<div class="t" style="left:774px;top:601px;color:#000">Sat</div>
<div class="t" style="left:809px;top:601px;color:#000">05/08/2017</div>
<div class="t" style="left:879px;top:601px;color:#000">14:10</div>
<div class="t" style="left:919px;top:601px;color:#000">Fri</div>
<div class="t" style="left:954px;top:601px;color:#000">25/08/2017</div>
<div class="t" style="left:1024px;top:601px;color:#000">16:30</div>
<div class="t" style="right:513px;top:601px;color:#000">21</div>
<div class="t" style="left:1089px;top:601px;color:#000">On Air...</div>
<div class="t" style="left:1139px;top:601px;color:#000">On Air...</div>
<div class="t" style="right:358px;top:601px;color:#000">1,101.54</div>
<div class="t" style="right:293px;top:601px;color:#000">1,101.54</div>
<div class="t" style="left:1309px;top:601px;color:#000">Alamo</div>
<div class="t" style="left:1384px;top:601px;color:#000">yes</div>
<div class="t" style="left:1409px;top:601px;color:#000">auto</div>
<div class="a" style="left:339px;top:601px;width:1px;height:15px;background:#d0d4d8"></div>
<div class="a" style="left:364px;top:601px;width:1px;height:15px;background:#d0d4d8"></div>
<div class="a" style="left:697px;top:601px;width:1px;height:15px;background:#d0d4d8"></div>
<div class="a" style="left:772px;top:601px;width:1px;height:15px;background:#d0d4d8"></div>
<div class="a" style="left:807px;top:601px;width:1px;height:15px;background:#d0d4d8"></div>
<div class="a" style="left:877px;top:601px;width:1px;height:15px;background:#d0d4d8"></div>
<div class="a" style="left:917px;top:601px;width:1px;height:15px;background:#d0d4d8"></div>
<div class="a" style="left:952px;top:601px;width:1px;height:15px;background:#d0d4d8"></div>
<div class="a" style="left:1022px;top:601px;width:1px;height:15px;background:#d0d4d8"></div>
<div class="a" style="left:1062px;top:601px;width:1px;height:15px;background:#d0d4d8"></div>
<div class="a" style="left:1087px;top:601px;width:1px;height:15px;background:#d0d4d8"></div>
<div class="a" style="left:1137px;top:601px;width:1px;height:15px;background:#d0d4d8"></div>
<div class="a" style="left:1187px;top:601px;width:1px;height:15px;background:#d0d4d8"></div>
<div class="a" style="left:1242px;top:601px;width:1px;height:15px;background:#d0d4d8"></div>
<div class="a" style="left:1307px;top:601px;width:1px;height:15px;background:#d0d4d8"></div>
<div class="a" style="left:1382px;top:601px;width:1px;height:15px;background:#d0d4d8"></div>
<div class="a" style="left:1407px;top:601px;width:1px;height:15px;background:#d0d4d8"></div>
<div class="a" style="left:1437px;top:601px;width:1px;height:15px;background:#d0d4d8"></div>
<div class="a" style="left:220px;top:616px;width:1218px;height:14px;background:#b4dcfe"></div>
<div class="a" style="left:220px;top:630px;width:1368px;height:1px;background:#d4d0c8"></div>
<div class="t" style="left:221px;top:616px;color:#000">Ford mustang Cabriol...</div>
<div class="t" style="right:1236px;top:616px;color:#000">4</div>
<div class="t" style="left:366px;top:616px;color:#000">Convertible(Standard) - Gold GPS - Plus Excess Refund</div>
<div class="t" style="left:699px;top:616px;color:#000">Flexible Car...</div>
<div class="t" style="left:774px;top:616px;color:#000">Sat</div>
<div class="t" style="left:809px;top:616px;color:#000">05/08/2017</div>
<div class="t" style="left:879px;top:616px;color:#000">14:10</div>
<div class="t" style="left:919px;top:616px;color:#000">Fri</div>
<div class="t" style="left:954px;top:616px;color:#000">25/08/2017</div>
<div class="t" style="left:1024px;top:616px;color:#000">16:30</div>
<div class="t" style="right:513px;top:616px;color:#000">21</div>
<div class="t" style="left:1089px;top:616px;color:#000">On Air...</div>
<div class="t" style="left:1139px;top:616px;color:#000">On Air...</div>
<div class="t" style="right:358px;top:616px;color:#000">1,101.54</div>
<div class="t" style="right:293px;top:616px;color:#000">1,101.54</div>
<div class="t" style="left:1309px;top:616px;color:#000">Alamo</div>
<div class="t" style="left:1384px;top:616px;color:#000">yes</div>
<div class="t" style="left:1409px;top:616px;color:#000">auto</div>
<div class="a" style="left:339px;top:616px;width:1px;height:15px;background:#d0d4d8"></div>
<div class="a" style="left:364px;top:616px;width:1px;height:15px;background:#d0d4d8"></div>
<div class="a" style="left:697px;top:616px;width:1px;height:15px;background:#d0d4d8"></div>
<div class="a" style="left:772px;top:616px;width:1px;height:15px;background:#d0d4d8"></div>
<div class="a" style="left:807px;top:616px;width:1px;height:15px;background:#d0d4d8"></div>
<div class="a" style="left:877px;top:616px;width:1px;height:15px;background:#d0d4d8"></div>
<div class="a" style="left:917px;top:616px;width:1px;height:15px;background:#d0d4d8"></div>
<div class="a" style="left:952px;top:616px;width:1px;height:15px;background:#d0d4d8"></div>
<div class="a" style="left:1022px;top:616px;width:1px;height:15px;background:#d0d4d8"></div>
<div class="a" style="left:1062px;top:616px;width:1px;height:15px;background:#d0d4d8"></div>
<div class="a" style="left:1087px;top:616px;width:1px;height:15px;background:#d0d4d8"></div>
<div class="a" style="left:1137px;top:616px;width:1px;height:15px;background:#d0d4d8"></div>
<div class="a" style="left:1187px;top:616px;width:1px;height:15px;background:#d0d4d8"></div>
<div class="a" style="left:1242px;top:616px;width:1px;height:15px;background:#d0d4d8"></div>
<div class="a" style="left:1307px;top:616px;width:1px;height:15px;background:#d0d4d8"></div>
<div class="a" style="left:1382px;top:616px;width:1px;height:15px;background:#d0d4d8"></div>
<div class="a" style="left:1407px;top:616px;width:1px;height:15px;background:#d0d4d8"></div>
<div class="a" style="left:1437px;top:616px;width:1px;height:15px;background:#d0d4d8"></div>
<div class="a" style="left:220px;top:631px;width:1218px;height:14px;background:#b4dcfe"></div>
<div class="a" style="left:220px;top:645px;width:1368px;height:1px;background:#d4d0c8"></div>
<div class="t" style="left:221px;top:631px;color:#000">Ford mustang Cabriol...</div>
<div class="t" style="right:1236px;top:631px;color:#000">4</div>
<div class="t" style="left:366px;top:631px;color:#000">Convertible(Standard) - Young Driver (age 24 or below)</div>
<div class="t" style="left:699px;top:631px;color:#000">Flexible Car...</div>
<div class="t" style="left:774px;top:631px;color:#000">Sat</div>
<div class="t" style="left:809px;top:631px;color:#000">05/08/2017</div>
<div class="t" style="left:879px;top:631px;color:#000">14:10</div>
<div class="t" style="left:919px;top:631px;color:#000">Fri</div>
<div class="t" style="left:954px;top:631px;color:#000">25/08/2017</div>
<div class="t" style="left:1024px;top:631px;color:#000">16:30</div>
<div class="t" style="right:513px;top:631px;color:#000">21</div>
<div class="t" style="left:1089px;top:631px;color:#000">On Air...</div>
<div class="t" style="left:1139px;top:631px;color:#000">On Air...</div>
<div class="t" style="right:358px;top:631px;color:#000">1,155.12</div>
<div class="t" style="right:293px;top:631px;color:#000">1,155.12</div>
<div class="t" style="left:1309px;top:631px;color:#000">Alamo</div>
<div class="t" style="left:1384px;top:631px;color:#000">yes</div>
<div class="t" style="left:1409px;top:631px;color:#000">auto</div>
<div class="a" style="left:339px;top:631px;width:1px;height:15px;background:#d0d4d8"></div>
<div class="a" style="left:364px;top:631px;width:1px;height:15px;background:#d0d4d8"></div>
<div class="a" style="left:697px;top:631px;width:1px;height:15px;background:#d0d4d8"></div>
<div class="a" style="left:772px;top:631px;width:1px;height:15px;background:#d0d4d8"></div>
<div class="a" style="left:807px;top:631px;width:1px;height:15px;background:#d0d4d8"></div>
<div class="a" style="left:877px;top:631px;width:1px;height:15px;background:#d0d4d8"></div>
<div class="a" style="left:917px;top:631px;width:1px;height:15px;background:#d0d4d8"></div>
<div class="a" style="left:952px;top:631px;width:1px;height:15px;background:#d0d4d8"></div>
<div class="a" style="left:1022px;top:631px;width:1px;height:15px;background:#d0d4d8"></div>
<div class="a" style="left:1062px;top:631px;width:1px;height:15px;background:#d0d4d8"></div>
<div class="a" style="left:1087px;top:631px;width:1px;height:15px;background:#d0d4d8"></div>
<div class="a" style="left:1137px;top:631px;width:1px;height:15px;background:#d0d4d8"></div>
<div class="a" style="left:1187px;top:631px;width:1px;height:15px;background:#d0d4d8"></div>
<div class="a" style="left:1242px;top:631px;width:1px;height:15px;background:#d0d4d8"></div>
<div class="a" style="left:1307px;top:631px;width:1px;height:15px;background:#d0d4d8"></div>
<div class="a" style="left:1382px;top:631px;width:1px;height:15px;background:#d0d4d8"></div>
<div class="a" style="left:1407px;top:631px;width:1px;height:15px;background:#d0d4d8"></div>
<div class="a" style="left:1437px;top:631px;width:1px;height:15px;background:#d0d4d8"></div>
<div class="a" style="left:220px;top:646px;width:1218px;height:14px;background:#b4dcfe"></div>
<div class="a" style="left:220px;top:660px;width:1368px;height:1px;background:#d4d0c8"></div>
<div class="t" style="left:221px;top:646px;color:#000">Ford mustang Cabriol...</div>
<div class="t" style="right:1236px;top:646px;color:#000">4</div>
<div class="t" style="left:366px;top:646px;color:#000">Convertible(Standard) - Young Driver (age 24 or below)</div>
<div class="t" style="left:699px;top:646px;color:#000">Flexible Car...</div>
<div class="t" style="left:774px;top:646px;color:#000">Sat</div>
<div class="t" style="left:809px;top:646px;color:#000">05/08/2017</div>
<div class="t" style="left:879px;top:646px;color:#000">14:10</div>
<div class="t" style="left:919px;top:646px;color:#000">Fri</div>
<div class="t" style="left:954px;top:646px;color:#000">25/08/2017</div>
<div class="t" style="left:1024px;top:646px;color:#000">16:30</div>
<div class="t" style="right:513px;top:646px;color:#000">21</div>
<div class="t" style="left:1089px;top:646px;color:#000">On Air...</div>
<div class="t" style="left:1139px;top:646px;color:#000">On Air...</div>
<div class="t" style="right:358px;top:646px;color:#000">1,155.12</div>
<div class="t" style="right:293px;top:646px;color:#000">1,155.12</div>
<div class="t" style="left:1309px;top:646px;color:#000">Alamo</div>
<div class="t" style="left:1384px;top:646px;color:#000">yes</div>
<div class="t" style="left:1409px;top:646px;color:#000">auto</div>
<div class="a" style="left:339px;top:646px;width:1px;height:15px;background:#d0d4d8"></div>
<div class="a" style="left:364px;top:646px;width:1px;height:15px;background:#d0d4d8"></div>
<div class="a" style="left:697px;top:646px;width:1px;height:15px;background:#d0d4d8"></div>
<div class="a" style="left:772px;top:646px;width:1px;height:15px;background:#d0d4d8"></div>
<div class="a" style="left:807px;top:646px;width:1px;height:15px;background:#d0d4d8"></div>
<div class="a" style="left:877px;top:646px;width:1px;height:15px;background:#d0d4d8"></div>
<div class="a" style="left:917px;top:646px;width:1px;height:15px;background:#d0d4d8"></div>
<div class="a" style="left:952px;top:646px;width:1px;height:15px;background:#d0d4d8"></div>
<div class="a" style="left:1022px;top:646px;width:1px;height:15px;background:#d0d4d8"></div>
<div class="a" style="left:1062px;top:646px;width:1px;height:15px;background:#d0d4d8"></div>
<div class="a" style="left:1087px;top:646px;width:1px;height:15px;background:#d0d4d8"></div>
<div class="a" style="left:1137px;top:646px;width:1px;height:15px;background:#d0d4d8"></div>
<div class="a" style="left:1187px;top:646px;width:1px;height:15px;background:#d0d4d8"></div>
<div class="a" style="left:1242px;top:646px;width:1px;height:15px;background:#d0d4d8"></div>
<div class="a" style="left:1307px;top:646px;width:1px;height:15px;background:#d0d4d8"></div>
<div class="a" style="left:1382px;top:646px;width:1px;height:15px;background:#d0d4d8"></div>
<div class="a" style="left:1407px;top:646px;width:1px;height:15px;background:#d0d4d8"></div>
<div class="a" style="left:1437px;top:646px;width:1px;height:15px;background:#d0d4d8"></div>
<div class="a" style="left:220px;top:661px;width:1218px;height:14px;background:#b4dcfe"></div>
<div class="a" style="left:220px;top:675px;width:1368px;height:1px;background:#d4d0c8"></div>
<div class="t" style="left:221px;top:661px;color:#000">Ford mustang Cabriol...</div>
<div class="t" style="right:1236px;top:661px;color:#000">4</div>
<div class="t" style="left:366px;top:661px;color:#000">Convertible(Standard) - Young Driver (age 24 or below) - Plus Ex...</div>
<div class="t" style="left:699px;top:661px;color:#000">Flexible Car...</div>
<div class="t" style="left:774px;top:661px;color:#000">Sat</div>
<div class="t" style="left:809px;top:661px;color:#000">05/08/2017</div>
<div class="t" style="left:879px;top:661px;color:#000">14:10</div>
<div class="t" style="left:919px;top:661px;color:#000">Fri</div>
<div class="t" style="left:954px;top:661px;color:#000">25/08/2017</div>
<div class="t" style="left:1024px;top:661px;color:#000">16:30</div>
<div class="t" style="right:513px;top:661px;color:#000">21</div>
<div class="t" style="left:1089px;top:661px;color:#000">On Air...</div>
<div class="t" style="left:1139px;top:661px;color:#000">On Air...</div>
<div class="t" style="right:358px;top:661px;color:#000">1,211.02</div>
<div class="t" style="right:293px;top:661px;color:#000">1,211.02</div>
<div class="t" style="left:1309px;top:661px;color:#000">Alamo</div>
<div class="t" style="left:1384px;top:661px;color:#000">yes</div>
<div class="t" style="left:1409px;top:661px;color:#000">auto</div>
<div class="a" style="left:339px;top:661px;width:1px;height:15px;background:#d0d4d8"></div>
<div class="a" style="left:364px;top:661px;width:1px;height:15px;background:#d0d4d8"></div>
<div class="a" style="left:697px;top:661px;width:1px;height:15px;background:#d0d4d8"></div>
<div class="a" style="left:772px;top:661px;width:1px;height:15px;background:#d0d4d8"></div>
<div class="a" style="left:807px;top:661px;width:1px;height:15px;background:#d0d4d8"></div>
<div class="a" style="left:877px;top:661px;width:1px;height:15px;background:#d0d4d8"></div>
<div class="a" style="left:917px;top:661px;width:1px;height:15px;background:#d0d4d8"></div>
<div class="a" style="left:952px;top:661px;width:1px;height:15px;background:#d0d4d8"></div>
<div class="a" style="left:1022px;top:661px;width:1px;height:15px;background:#d0d4d8"></div>
<div class="a" style="left:1062px;top:661px;width:1px;height:15px;background:#d0d4d8"></div>
<div class="a" style="left:1087px;top:661px;width:1px;height:15px;background:#d0d4d8"></div>
<div class="a" style="left:1137px;top:661px;width:1px;height:15px;background:#d0d4d8"></div>
<div class="a" style="left:1187px;top:661px;width:1px;height:15px;background:#d0d4d8"></div>
<div class="a" style="left:1242px;top:661px;width:1px;height:15px;background:#d0d4d8"></div>
<div class="a" style="left:1307px;top:661px;width:1px;height:15px;background:#d0d4d8"></div>
<div class="a" style="left:1382px;top:661px;width:1px;height:15px;background:#d0d4d8"></div>
<div class="a" style="left:1407px;top:661px;width:1px;height:15px;background:#d0d4d8"></div>
<div class="a" style="left:1437px;top:661px;width:1px;height:15px;background:#d0d4d8"></div>
<div class="a" style="left:220px;top:676px;width:1218px;height:14px;background:#b4dcfe"></div>
<div class="a" style="left:220px;top:690px;width:1368px;height:1px;background:#d4d0c8"></div>
<div class="t" style="left:221px;top:676px;color:#000">Ford mustang Cabriol...</div>
<div class="t" style="right:1236px;top:676px;color:#000">4</div>
<div class="t" style="left:366px;top:676px;color:#000">Convertible(Standard) - Young Driver (age 24 or below) - Plus Ex...</div>
<div class="t" style="left:699px;top:676px;color:#000">Flexible Car...</div>
<div class="t" style="left:774px;top:676px;color:#000">Sat</div>
<div class="t" style="left:809px;top:676px;color:#000">05/08/2017</div>
<div class="t" style="left:879px;top:676px;color:#000">14:10</div>
<div class="t" style="left:919px;top:676px;color:#000">Fri</div>
<div class="t" style="left:954px;top:676px;color:#000">25/08/2017</div>
<div class="t" style="left:1024px;top:676px;color:#000">16:30</div>
<div class="t" style="right:513px;top:676px;color:#000">21</div>
<div class="t" style="left:1089px;top:676px;color:#000">On Air...</div>
<div class="t" style="left:1139px;top:676px;color:#000">On Air...</div>
<div class="t" style="right:358px;top:676px;color:#000">1,211.02</div>
<div class="t" style="right:293px;top:676px;color:#000">1,211.02</div>
<div class="t" style="left:1309px;top:676px;color:#000">Alamo</div>
<div class="t" style="left:1384px;top:676px;color:#000">yes</div>
<div class="t" style="left:1409px;top:676px;color:#000">auto</div>
<div class="a" style="left:339px;top:676px;width:1px;height:15px;background:#d0d4d8"></div>
<div class="a" style="left:364px;top:676px;width:1px;height:15px;background:#d0d4d8"></div>
<div class="a" style="left:697px;top:676px;width:1px;height:15px;background:#d0d4d8"></div>
<div class="a" style="left:772px;top:676px;width:1px;height:15px;background:#d0d4d8"></div>
<div class="a" style="left:807px;top:676px;width:1px;height:15px;background:#d0d4d8"></div>
<div class="a" style="left:877px;top:676px;width:1px;height:15px;background:#d0d4d8"></div>
<div class="a" style="left:917px;top:676px;width:1px;height:15px;background:#d0d4d8"></div>
<div class="a" style="left:952px;top:676px;width:1px;height:15px;background:#d0d4d8"></div>
<div class="a" style="left:1022px;top:676px;width:1px;height:15px;background:#d0d4d8"></div>
<div class="a" style="left:1062px;top:676px;width:1px;height:15px;background:#d0d4d8"></div>
<div class="a" style="left:1087px;top:676px;width:1px;height:15px;background:#d0d4d8"></div>
<div class="a" style="left:1137px;top:676px;width:1px;height:15px;background:#d0d4d8"></div>
<div class="a" style="left:1187px;top:676px;width:1px;height:15px;background:#d0d4d8"></div>
<div class="a" style="left:1242px;top:676px;width:1px;height:15px;background:#d0d4d8"></div>
<div class="a" style="left:1307px;top:676px;width:1px;height:15px;background:#d0d4d8"></div>
<div class="a" style="left:1382px;top:676px;width:1px;height:15px;background:#d0d4d8"></div>
<div class="a" style="left:1407px;top:676px;width:1px;height:15px;background:#d0d4d8"></div>
<div class="a" style="left:1437px;top:676px;width:1px;height:15px;background:#d0d4d8"></div>
<div class="t" style="left:222px;top:782px;">First portion: 16.7 sec, total search time: 16.9 sec</div>
<div class="a" style="left:1560px;top:778px;width:24px;height:23px;background:#d4d0c8;border:1px solid;border-color:#fff #404040 #404040 #fff;box-shadow:inset -1px -1px #808080"></div>
<svg class="a" style="left:1566px;top:781px" width="12" height="16" viewBox="0 0 12 16"><circle cx="5.5" cy="3" r="1.8" fill="#0a50a8"/><path d="M3 6h4v7h1.5v1.5h-6v-1.5h1.5v-5.5h-1z" fill="#0a50a8"/></svg>
<div class="a" style="left:215px;top:805px;width:1378px;height:1px;background:#808080"></div>
<div class="a" style="left:215px;top:806px;width:53px;height:17px;background:#d4d0c8;border-right:1px solid #808080;"></div>
<div class="t" style="left:218px;top:807px;color:#000;letter-spacing:-0.3px">Summary</div>
<div class="a" style="left:268px;top:806px;width:41px;height:17px;background:#d4d0c8;border-right:1px solid #808080;"></div>
<div class="t" style="left:271px;top:807px;color:#000;letter-spacing:-0.3px">Search</div>
<div class="a" style="left:309px;top:806px;width:129px;height:17px;background:#ccffcc;border-right:1px solid #808080;"></div>
<div class="t" style="left:312px;top:807px;color:#000;letter-spacing:-0.5px">Flt 3A,1C LGW MCO LGW</div>
<div class="a" style="left:438px;top:806px;width:84px;height:17px;background:#ccffcc;border-right:1px solid #808080;"></div>
<div class="t" style="left:441px;top:807px;color:#000;letter-spacing:-0.3px">Acc 3A,1C MCO</div>
<div class="a" style="left:522px;top:806px;width:49px;height:17px;background:#008000;border-radius:3px 3px 0 0;border:1px solid #006000;"></div>
<div class="t" style="left:525px;top:807px;color:#fff;letter-spacing:-0.5px">Car MCO</div>
<div class="a" style="left:571px;top:806px;width:64px;height:17px;background:#ccffcc;border-right:1px solid #808080;"></div>
<div class="t" style="left:574px;top:807px;color:#000;letter-spacing:0.1px">Tour 3A,1C</div>
<div class="a" style="left:635px;top:806px;width:96px;height:17px;background:#d4d0c8;border-right:1px solid #808080;"></div>
<div class="t" style="left:638px;top:807px;color:#000;letter-spacing:-0.4px">Financial Summary</div>
</body></html>
